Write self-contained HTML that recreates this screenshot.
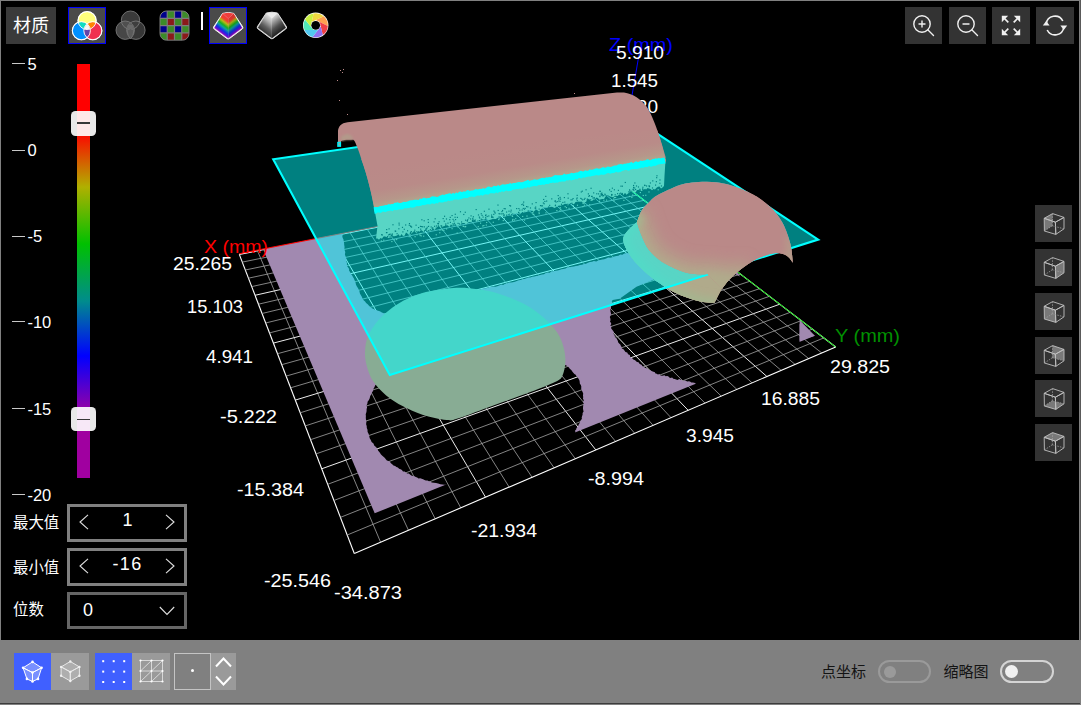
<!DOCTYPE html>
<html><head><meta charset="utf-8"><title>3D</title>
<style>
html,body{margin:0;padding:0;background:#000;}
body{width:1081px;height:705px;position:relative;overflow:hidden;font-family:"Liberation Sans","Noto Sans CJK SC",sans-serif;color:#fff;}
.abs{position:absolute}
</style></head><body>

<svg id="scene" width="1081" height="705" viewBox="0 0 1081 705" style="position:absolute;left:0;top:0">
<defs>
<mask id="floormask" maskUnits="userSpaceOnUse" x="0" y="0" width="1081" height="705">
  <polygon points="263.0,249.0 374.7,513.3 814.8,335.8 612.6,180.1" fill="#fff"/>
  <polygon points="378.2,380.1 377.3,382.0 376.5,383.9 375.1,385.5 374.4,387.3 373.4,389.0 373.0,390.9 371.9,392.4 371.4,394.2 370.2,396.1 369.7,398.2 368.9,400.0 367.6,401.7 367.4,403.6 366.5,405.4 367.1,407.4 366.6,409.1 366.6,410.9 366.3,412.6 365.7,414.3 365.9,416.0 365.8,417.6 365.9,419.3 366.4,420.9 366.3,422.5 366.1,424.3 366.7,426.0 366.8,428.0 367.5,429.8 367.6,432.0 368.7,433.9 369.2,436.0 369.7,438.2 370.8,440.0 371.6,442.0 373.5,443.4 374.2,445.6 376.0,447.0 377.4,448.7 378.2,450.8 379.7,452.5 381.0,454.4 382.6,455.9 383.8,456.9 384.9,458.0 385.8,459.3 386.9,460.4 388.5,461.1 389.9,461.8 390.9,463.3 392.2,464.3 393.5,465.5 395.1,466.0 396.4,467.0 397.9,467.6 399.1,468.8 400.6,469.3 401.9,470.0 403.0,471.4 404.6,471.5 405.9,472.4 407.1,473.5 408.8,473.5 410.0,474.5 411.3,475.5 412.7,476.0 414.4,476.2 415.8,476.9 417.2,477.4 418.5,478.5 420.2,478.3 421.7,478.8 423.1,479.3 424.5,480.0 425.9,480.6 427.5,480.4 428.9,481.2 430.4,481.5 431.7,482.5 433.9,482.7 436.0,483.1 438.1,483.6 440.3,484.2 442.4,484.5 444.5,484.8 446.0,484.7 447.4,485.0 447.4,488.0 575.5,436.3 575.2,430.2 576.2,429.5 576.4,428.3 577.4,427.0 578.3,425.7 578.8,424.2 579.7,422.9 580.2,421.5 580.7,420.2 581.9,419.1 581.7,417.5 582.1,416.1 582.6,414.7 582.6,413.1 583.6,411.6 583.2,409.9 583.0,408.3 583.1,406.6 583.3,405.0 583.8,403.4 583.0,401.8 583.9,400.2 583.0,398.7 583.2,397.0 583.0,395.4 583.2,393.6 582.6,391.9 581.7,390.2 581.2,388.5 581.3,386.6 580.8,384.9 579.8,383.5 579.7,381.7 579.3,380.1 578.5,378.7 577.7,377.2 576.5,376.2 575.7,374.7 574.4,373.9 573.3,372.7 572.3,371.4 571.3,370.0 570.0,369.0 568.9,367.4 567.4,366.1 565.5,365.2 563.9,364.0 562.9,363.1 562.0,362.0 520.0,330.0 420.0,330.0" fill="#000"/>
  <polygon points="612.6,300.0 611.8,301.5 612.2,303.2 611.6,304.7 611.1,306.1 611.0,307.7 610.4,309.0 610.4,310.5 610.6,312.0 611.0,313.8 610.6,315.5 609.8,317.1 610.4,318.7 610.5,320.2 610.0,321.7 611.1,323.0 611.2,324.2 610.3,325.6 611.7,326.5 611.0,328.0 611.6,329.1 612.4,330.1 613.2,331.1 613.9,332.2 613.4,333.7 614.2,334.8 614.9,336.0 614.9,337.5 616.5,338.3 617.1,339.6 617.8,340.8 618.1,342.3 619.1,343.4 620.3,344.4 620.8,345.7 621.6,347.0 621.9,348.6 623.5,349.3 624.4,350.6 625.5,351.9 627.2,352.5 628.1,354.2 629.8,355.0 630.3,357.1 632.0,358.0 633.3,359.5 635.2,360.2 636.0,361.3 637.1,362.1 638.5,362.3 639.7,364.0 641.5,364.7 642.5,366.3 644.1,366.9 645.4,368.0 647.0,368.3 648.4,369.4 650.0,370.0 651.5,371.1 653.3,371.7 654.6,372.1 655.5,373.4 656.7,373.8 657.9,374.4 659.5,373.9 660.4,375.4 662.3,375.8 664.5,375.3 665.6,376.2 667.0,376.0 668.2,376.3 669.3,377.6 670.6,378.1 672.1,377.5 673.3,378.7 674.7,378.9 676.1,379.6 677.5,380.0 679.2,379.1 680.6,379.7 681.9,380.1 683.2,381.2 684.8,380.2 686.1,380.9 687.5,381.4 689.0,381.2 690.3,381.7 691.4,382.6 692.8,382.6 694.2,382.8 695.6,383.2 695.6,387.9 799.6,345.9 799.6,320.0 850.0,360.0 850.0,250.0 737.8,272.2 700.0,250.0 655.0,279.0 636.5,286.7 619.6,298.7" fill="#000"/>
  <polygon points="342.1,231.0 342.1,232.8 342.8,234.4 342.3,236.2 342.7,237.9 343.5,239.5 343.7,241.3 344.1,243.1 344.2,245.0 344.5,246.5 344.5,248.0 344.3,249.6 345.0,251.0 345.3,252.6 344.9,254.3 345.4,255.9 346.1,257.5 346.4,259.3 346.2,261.2 347.0,262.9 346.9,265.0 347.5,266.8 348.6,268.0 349.1,269.3 349.1,270.8 350.1,271.9 350.6,273.3 351.4,274.4 352.2,275.5 352.8,276.7 353.6,278.0 354.3,279.4 354.9,281.1 355.6,282.7 356.0,284.7 356.9,286.4 357.9,288.1 358.8,289.8 359.5,291.6 359.9,293.5 360.9,295.2 361.8,296.8 362.5,298.6 363.6,300.2 365.1,301.4 366.1,303.1 367.7,304.3 369.0,305.8 370.3,307.1 371.9,308.2 373.6,309.1 375.4,309.8 377.2,310.4 379.0,311.0 380.3,311.4 381.4,312.2 420.0,330.0 469.9,291.7 472.2,291.1 474.5,290.4 477.0,290.8 479.3,290.3 481.4,289.0 483.4,288.6 485.4,288.2 487.4,287.9 489.3,287.1 491.3,287.0 493.2,286.4 495.4,286.7 497.3,286.3 499.2,285.4 501.1,284.6 503.2,285.0 505.0,283.8 507.0,283.4 508.9,282.5 510.9,282.5 512.9,282.2 514.9,281.8 516.8,281.0 518.6,280.3 520.7,280.1 522.5,279.3 524.6,279.1 526.4,278.2 528.3,277.6 530.3,277.4 532.2,276.8 534.3,276.6 536.2,276.0 538.2,275.7 540.1,275.1 542.0,274.6 544.0,274.3 545.8,273.1 547.7,272.5 549.8,272.7 551.5,271.2 553.6,271.3 555.5,270.7 557.5,270.4 559.5,270.0 561.5,269.2 563.6,268.9 565.6,268.5 567.5,267.2 569.6,267.2 571.7,266.7 573.8,266.6 575.8,266.1 577.9,265.7 579.8,264.9 582.0,264.8 583.9,264.1 586.0,263.7 587.9,262.7 589.9,262.1 592.0,261.8 593.9,261.0 596.2,261.4 598.1,260.6 600.2,260.1 602.2,259.6 604.2,259.2 606.2,258.5 608.1,257.4 610.3,257.8 612.3,257.3 614.3,256.5 616.3,256.0 618.4,255.7 620.2,254.5 622.4,254.8 624.3,253.5 626.3,253.2 628.4,253.2 630.2,252.0 632.4,252.1 634.4,251.9 636.2,250.8 638.1,250.1 640.1,249.7 642.2,249.4 644.2,248.9 646.1,248.2 648.1,247.7 650.0,247.0 720.0,235.0 652.6,175.1 612.6,140.1 330.0,190.0" fill="#000"/>
</mask>
<linearGradient id="cylgrad" gradientUnits="userSpaceOnUse" x1="500" y1="146" x2="507" y2="187">
  <stop offset="0" stop-color="#ba8988"/><stop offset="0.55" stop-color="#b98b88"/><stop offset="0.82" stop-color="#b6978a"/><stop offset="1" stop-color="#aeac8e"/>
</linearGradient>
<filter id="blur9" x="-30%" y="-30%" width="160%" height="160%"><feGaussianBlur stdDeviation="7"/></filter>
<filter id="blur1"><feGaussianBlur stdDeviation="1"/></filter>
<filter id="blur4" x="-30%" y="-30%" width="160%" height="160%"><feGaussianBlur stdDeviation="3.5"/></filter>
<clipPath id="d2clip"><path d="M637.0,222.3 C637.8,220.2 639.8,213.5 642.0,210.0 C644.2,206.5 647.6,203.6 650.0,201.2 C652.4,198.8 653.4,197.7 656.5,195.8 C659.6,193.9 664.4,191.6 668.4,189.8 C672.4,188.0 676.7,186.0 680.6,184.8 C684.5,183.6 687.9,183.1 692.0,182.6 C696.1,182.1 701.3,181.8 705.3,181.7 C709.3,181.6 712.9,181.9 716.0,182.2 C719.1,182.5 721.0,183.0 723.8,183.6 C726.6,184.2 729.9,185.1 733.0,186.0 C736.1,186.9 738.9,187.8 742.2,189.2 C745.5,190.6 749.9,192.9 753.0,194.6 C756.1,196.3 758.2,197.6 760.7,199.3 C763.2,201.0 765.5,202.8 768.0,205.0 C770.5,207.2 772.9,209.1 775.4,212.2 C777.9,215.2 780.8,219.6 782.8,223.3 C784.8,227.0 786.0,230.3 787.4,234.3 C788.8,238.3 790.2,242.6 791.1,247.3 C792.0,252.1 792.5,260.2 792.8,262.8 C790.5,259 788.5,256.5 786,255.3 C782,253.4 778,253 774,253.6 C768,254.6 762,256.6 757,259 C750.5,262.3 745,266 740.2,269.8 C736.5,272.7 733.3,275.5 730.5,278.2 C726.5,282.3 723.4,286.5 720.9,290.3 L714.5,302.8 C711,303 707,302.6 703,302 C699.5,301.5 697,300.8 694.4,300 C689,298.3 684.5,296.8 680,295 C675,292.8 671,290.8 667,288 C663,285.3 659.3,283.2 655.8,280.7 C650,276.5 645.5,272.6 641.3,268.6 C636.5,264 632.5,259 629.2,254 C626,249 623.5,244 623.2,239.6 C623,235.5 629,228.5 637,222.3 Z"/></clipPath>
<clipPath id="d2up"><path d="M637,222.3 C638.5,227 639.5,231 641.3,234.8 C643.3,240 645.5,245 648.5,249.3 C653,255.2 658.8,260 665.4,263.8 C671.5,267.4 678,270.3 684.7,272.2 C692,274 699.5,274.6 707.6,274 L760,330 L860,330 L860,150 L600,150 Z"/></clipPath>
<g id="dome2">
  <path d="M637.0,222.3 C637.8,220.2 639.8,213.5 642.0,210.0 C644.2,206.5 647.6,203.6 650.0,201.2 C652.4,198.8 653.4,197.7 656.5,195.8 C659.6,193.9 664.4,191.6 668.4,189.8 C672.4,188.0 676.7,186.0 680.6,184.8 C684.5,183.6 687.9,183.1 692.0,182.6 C696.1,182.1 701.3,181.8 705.3,181.7 C709.3,181.6 712.9,181.9 716.0,182.2 C719.1,182.5 721.0,183.0 723.8,183.6 C726.6,184.2 729.9,185.1 733.0,186.0 C736.1,186.9 738.9,187.8 742.2,189.2 C745.5,190.6 749.9,192.9 753.0,194.6 C756.1,196.3 758.2,197.6 760.7,199.3 C763.2,201.0 765.5,202.8 768.0,205.0 C770.5,207.2 772.9,209.1 775.4,212.2 C777.9,215.2 780.8,219.6 782.8,223.3 C784.8,227.0 786.0,230.3 787.4,234.3 C788.8,238.3 790.2,242.6 791.1,247.3 C792.0,252.1 792.5,260.2 792.8,262.8 C790.5,259 788.5,256.5 786,255.3 C782,253.4 778,253 774,253.6 C768,254.6 762,256.6 757,259 C750.5,262.3 745,266 740.2,269.8 C736.5,272.7 733.3,275.5 730.5,278.2 C726.5,282.3 723.4,286.5 720.9,290.3 L714.5,302.8 C711,303 707,302.6 703,302 C699.5,301.5 697,300.8 694.4,300 C689,298.3 684.5,296.8 680,295 C675,292.8 671,290.8 667,288 C663,285.3 659.3,283.2 655.8,280.7 C650,276.5 645.5,272.6 641.3,268.6 C636.5,264 632.5,259 629.2,254 C626,249 623.5,244 623.2,239.6 C623,235.5 629,228.5 637,222.3 Z" fill="#ba8988"/>
  <g clip-path="url(#d2clip)">
    <polygon points="646.2,209.5 647.0,211.8 648.2,215.1 649.3,218.1 650.0,220.1 650.4,221.4 650.8,222.9 651.6,225.1 652.5,227.7 653.4,230.0 654.3,232.1 655.2,234.2 656.2,236.4 657.3,238.6 658.1,240.3 659.0,241.7 660.6,243.6 662.5,245.8 664.5,247.6 666.5,249.2 669.1,250.9 671.8,252.5 674.5,253.9 677.3,255.3 680.2,256.6 683.2,257.9 685.7,258.9 688.0,259.6 690.7,260.2 693.8,260.7 696.8,261.0 699.7,261.1 703.5,261.0 708.3,261.0 713.1,261.5 717.3,262.1 721.8,262.6 726.7,263.4 730.9,264.0 733.4,264.1 736.7,263.2 741.4,261.4 745.2,259.9 760.0,300.0 740.0,330.0 680.0,325.0 640.0,300.0 605.0,260.0 605.0,225.0 625.0,205.0" fill="#b4a08a" filter="url(#blur9)"/>
    <polygon points="636.8,213.0 637.7,215.3 638.8,218.5 639.8,221.3 640.4,223.1 640.8,224.4 641.3,226.0 642.2,228.4 643.1,231.1 644.1,233.7 645.1,236.1 646.1,238.4 647.2,240.7 648.3,243.1 649.5,245.3 650.9,247.5 653.0,250.1 655.4,252.8 658.0,255.2 660.7,257.4 663.8,259.3 666.9,261.2 669.9,262.9 673.0,264.3 676.2,265.8 679.3,267.1 682.3,268.3 685.5,269.3 688.9,270.1 692.5,270.6 696.2,271.0 699.8,271.1 703.6,271.0 707.8,271.0 711.9,271.4 716.0,272.0 720.4,272.5 725.3,273.3 730.1,274.0 734.6,274.0 739.7,272.8 745.0,270.7 748.9,269.2 760.0,300.0 740.0,330.0 680.0,325.0 640.0,300.0 605.0,260.0 605.0,225.0 625.0,205.0" fill="#b0aa8b" filter="url(#blur4)"/>
    <path d="M640,215 C632,224 622,234 623.2,241 C625,252 640,268.6 655.8,281.5 C668,290.5 682,297 694.4,301 C702,303.4 709,304 716,303.5" fill="none" stroke="#a6b48e" stroke-width="14" filter="url(#blur4)"/>
    <path d="M788,238 L792.5,263 L783,254" fill="none" stroke="#b2a68c" stroke-width="4" filter="url(#blur4)"/>
  </g>
</g>
</defs>
<rect width="1081" height="705" fill="#000"/>
<g>
<line x1="239.3" y1="254.4" x2="617.5" y2="180.0" stroke="#ffffff" stroke-width="1.1"/>
<line x1="239.3" y1="254.4" x2="354.3" y2="553.5" stroke="#ffffff" stroke-width="1.1"/>
<line x1="242.3" y1="262.1" x2="623.9" y2="184.9" stroke="#a4a4a4" stroke-width="0.8"/>
<line x1="257.5" y1="250.8" x2="380.6" y2="542.2" stroke="#a4a4a4" stroke-width="0.8"/>
<line x1="245.3" y1="270.0" x2="630.4" y2="189.9" stroke="#a4a4a4" stroke-width="0.8"/>
<line x1="277.0" y1="247.0" x2="408.5" y2="530.3" stroke="#a4a4a4" stroke-width="0.8"/>
<line x1="248.4" y1="278.2" x2="637.1" y2="195.0" stroke="#a4a4a4" stroke-width="0.8"/>
<line x1="295.9" y1="243.3" x2="435.2" y2="518.8" stroke="#a4a4a4" stroke-width="0.8"/>
<line x1="251.7" y1="286.6" x2="644.0" y2="200.3" stroke="#a4a4a4" stroke-width="0.8"/>
<line x1="314.4" y1="239.6" x2="460.8" y2="507.8" stroke="#a4a4a4" stroke-width="0.8"/>
<line x1="255.0" y1="295.3" x2="651.0" y2="205.6" stroke="#ececec" stroke-width="1.0"/>
<line x1="332.4" y1="236.1" x2="485.5" y2="497.2" stroke="#ececec" stroke-width="1.0"/>
<line x1="258.5" y1="304.2" x2="658.2" y2="211.1" stroke="#a4a4a4" stroke-width="0.8"/>
<line x1="350.0" y1="232.6" x2="509.2" y2="487.1" stroke="#a4a4a4" stroke-width="0.8"/>
<line x1="262.0" y1="313.5" x2="665.5" y2="216.7" stroke="#a4a4a4" stroke-width="0.8"/>
<line x1="367.2" y1="229.2" x2="532.1" y2="477.3" stroke="#a4a4a4" stroke-width="0.8"/>
<line x1="265.7" y1="323.0" x2="673.0" y2="222.5" stroke="#a4a4a4" stroke-width="0.8"/>
<line x1="383.9" y1="226.0" x2="554.1" y2="467.8" stroke="#a4a4a4" stroke-width="0.8"/>
<line x1="269.5" y1="332.9" x2="680.7" y2="228.4" stroke="#a4a4a4" stroke-width="0.8"/>
<line x1="400.2" y1="222.7" x2="575.3" y2="458.7" stroke="#a4a4a4" stroke-width="0.8"/>
<line x1="273.4" y1="343.1" x2="688.6" y2="234.4" stroke="#ececec" stroke-width="1.0"/>
<line x1="416.1" y1="219.6" x2="595.8" y2="449.9" stroke="#ececec" stroke-width="1.0"/>
<line x1="277.5" y1="353.7" x2="696.7" y2="240.6" stroke="#a4a4a4" stroke-width="0.8"/>
<line x1="431.7" y1="216.6" x2="615.5" y2="441.4" stroke="#a4a4a4" stroke-width="0.8"/>
<line x1="281.7" y1="364.7" x2="705.0" y2="247.0" stroke="#a4a4a4" stroke-width="0.8"/>
<line x1="446.9" y1="213.6" x2="634.6" y2="433.2" stroke="#a4a4a4" stroke-width="0.8"/>
<line x1="286.1" y1="376.1" x2="713.5" y2="253.5" stroke="#a4a4a4" stroke-width="0.8"/>
<line x1="461.7" y1="210.6" x2="653.1" y2="425.3" stroke="#a4a4a4" stroke-width="0.8"/>
<line x1="290.6" y1="387.8" x2="722.2" y2="260.2" stroke="#a4a4a4" stroke-width="0.8"/>
<line x1="476.2" y1="207.8" x2="671.0" y2="417.7" stroke="#a4a4a4" stroke-width="0.8"/>
<line x1="295.3" y1="400.1" x2="731.2" y2="267.0" stroke="#ececec" stroke-width="1.0"/>
<line x1="490.4" y1="205.0" x2="688.2" y2="410.3" stroke="#ececec" stroke-width="1.0"/>
<line x1="300.2" y1="412.8" x2="740.4" y2="274.1" stroke="#a4a4a4" stroke-width="0.8"/>
<line x1="504.3" y1="202.3" x2="705.0" y2="403.1" stroke="#a4a4a4" stroke-width="0.8"/>
<line x1="305.3" y1="425.9" x2="749.8" y2="281.3" stroke="#a4a4a4" stroke-width="0.8"/>
<line x1="517.8" y1="199.6" x2="721.2" y2="396.1" stroke="#a4a4a4" stroke-width="0.8"/>
<line x1="310.5" y1="439.7" x2="759.5" y2="288.7" stroke="#a4a4a4" stroke-width="0.8"/>
<line x1="531.1" y1="197.0" x2="736.9" y2="389.4" stroke="#a4a4a4" stroke-width="0.8"/>
<line x1="316.0" y1="453.9" x2="769.5" y2="296.3" stroke="#a4a4a4" stroke-width="0.8"/>
<line x1="544.1" y1="194.4" x2="752.1" y2="382.9" stroke="#a4a4a4" stroke-width="0.8"/>
<line x1="321.7" y1="468.8" x2="779.8" y2="304.2" stroke="#ececec" stroke-width="1.0"/>
<line x1="556.8" y1="191.9" x2="766.9" y2="376.5" stroke="#ececec" stroke-width="1.0"/>
<line x1="327.7" y1="484.3" x2="790.3" y2="312.3" stroke="#a4a4a4" stroke-width="0.8"/>
<line x1="569.2" y1="189.5" x2="781.2" y2="370.4" stroke="#a4a4a4" stroke-width="0.8"/>
<line x1="333.9" y1="500.5" x2="801.2" y2="320.6" stroke="#a4a4a4" stroke-width="0.8"/>
<line x1="581.4" y1="187.1" x2="795.1" y2="364.4" stroke="#a4a4a4" stroke-width="0.8"/>
<line x1="340.4" y1="517.4" x2="812.3" y2="329.1" stroke="#a4a4a4" stroke-width="0.8"/>
<line x1="593.3" y1="184.8" x2="808.7" y2="358.6" stroke="#a4a4a4" stroke-width="0.8"/>
<line x1="347.2" y1="535.0" x2="823.8" y2="337.9" stroke="#a4a4a4" stroke-width="0.8"/>
<line x1="605.0" y1="182.5" x2="821.8" y2="353.0" stroke="#a4a4a4" stroke-width="0.8"/>
<line x1="354.3" y1="553.5" x2="835.7" y2="347.0" stroke="#ffffff" stroke-width="1.1"/>
<line x1="617.5" y1="180.0" x2="835.7" y2="347.0" stroke="#ffffff" stroke-width="1.1"/>
</g>
<line x1="835.7" y1="347.0" x2="617.5" y2="180.0" stroke="#00e800" stroke-width="1"/>
<line x1="617.5" y1="180.0" x2="639.8" y2="50" stroke="#0000ff" stroke-width="1"/>
<!-- purple floor -->
<rect width="1081" height="705" fill="#a189b0" mask="url(#floormask)"/>
<polygon points="799.6,320 799.6,340.8 814.8,335.8" fill="#a189b0"/>
<polygon points="733,273 740,276.5 737,272" fill="#a189b0"/>
<line x1="239.3" y1="253.70000000000002" x2="617.5" y2="179.3" stroke="#ff0000" stroke-width="1.1"/>
<!-- left dome -->
<path d="M453.7,288.0 C444.5,288.6 431.6,290.4 422.4,293.0 C413.1,295.6 405.4,299.4 398.2,303.8 C391.0,308.2 384.0,314.0 379.0,319.4 C374.0,324.8 370.3,330.9 368.0,336.3 C365.7,341.7 365.2,347.0 365.0,352.0 C364.8,357.0 365.6,361.7 366.9,366.5 C368.2,371.3 369.8,376.2 373.0,381.0 C376.2,385.8 381.2,391.2 386.2,395.4 C391.2,399.6 397.0,403.1 403.0,406.3 C409.0,409.5 415.1,412.4 422.4,414.7 C429.6,417.0 440.5,419.4 446.5,420.0 C452.5,420.6 450.5,420.8 458.5,418.3 C466.5,415.8 482.6,409.4 494.7,405.0 C506.8,400.6 521.0,395.6 531.0,391.8 C541.0,388.0 549.8,384.6 555.0,382.0 C560.2,379.4 560.6,379.4 562.3,376.0 C564.0,372.6 565.2,366.5 565.4,361.7 C565.6,356.9 564.8,351.8 563.5,347.0 C562.2,342.2 560.8,337.7 557.4,332.7 C554.0,327.7 548.6,321.8 543.0,317.0 C537.4,312.2 531.0,307.6 523.7,303.8 C516.5,300.0 507.1,296.4 499.5,294.0 C491.9,291.6 485.4,290.3 477.8,289.3 C470.2,288.3 462.9,287.4 453.7,288.0Z" fill="#88ac94"/>
<!-- z labels behind cylinder -->
<g font-family="'Liberation Sans',sans-serif" font-size="17.5" fill="#fff">
<text x="609" y="51" fill="#0000ff" textLength="64" lengthAdjust="spacingAndGlyphs">Z (mm)</text>
<text x="616" y="58.5" textLength="48" lengthAdjust="spacingAndGlyphs">5.910</text>
<text x="611" y="86.5" textLength="47" lengthAdjust="spacingAndGlyphs">1.545</text>
<text x="604" y="112.5" textLength="54" lengthAdjust="spacingAndGlyphs">-2.820</text>
</g>
<!-- lower parts (below plane) of cylinder -->
<polygon points="374.4,209.0 665.6,159.0 664.5,176.0 664.0,186.0 664.0,185.9 662.5,187.4 661.0,188.5 659.5,186.5 658.0,186.8 656.5,187.8 655.0,189.4 653.5,188.9 652.0,190.2 650.5,188.9 649.0,188.6 647.5,188.0 646.0,190.1 644.5,189.2 643.0,190.0 641.5,190.9 640.0,191.0 638.5,189.8 637.0,190.2 635.5,192.4 634.0,192.5 632.5,191.5 631.0,191.4 629.5,192.2 628.0,193.6 626.5,194.8 625.0,192.8 623.5,194.9 622.0,192.8 620.5,194.7 619.0,194.7 617.5,195.9 616.0,195.8 614.5,196.3 613.0,197.3 611.5,196.8 610.0,196.5 608.5,195.6 607.0,195.8 605.5,196.5 604.0,199.1 602.5,199.0 601.0,199.2 599.5,199.8 598.0,198.3 596.5,197.3 595.0,199.5 593.5,199.4 592.0,201.0 590.5,200.7 589.0,198.8 587.5,199.1 586.0,202.1 584.5,202.3 583.0,202.9 581.5,201.5 580.0,201.7 578.5,201.5 577.0,201.8 575.5,201.9 574.0,204.3 572.5,203.8 571.0,203.7 569.5,202.7 568.0,205.7 566.5,203.8 565.0,203.3 563.5,204.5 562.0,204.9 560.5,205.7 559.0,205.6 557.5,205.9 556.0,207.2 554.5,207.9 553.0,207.2 551.5,206.5 550.0,206.7 548.5,206.5 547.0,207.6 545.5,207.0 544.0,207.6 542.5,207.7 541.0,209.0 539.5,211.0 538.0,211.0 536.5,209.1 535.0,210.3 533.5,211.9 532.0,209.9 530.5,210.0 529.0,210.3 527.5,211.3 526.0,212.1 524.5,211.6 523.0,213.0 521.5,212.0 520.0,214.6 518.5,214.1 517.0,212.9 515.5,213.4 514.0,214.1 512.5,213.2 511.0,216.1 509.5,213.5 508.0,214.6 506.5,216.0 505.0,216.6 503.5,215.9 502.0,217.1 500.5,215.2 499.0,217.6 497.5,217.3 496.0,218.9 494.5,219.1 493.0,218.4 491.5,219.3 490.0,219.8 488.5,220.3 487.0,218.7 485.5,218.4 484.0,219.7 482.5,219.2 481.0,219.4 479.5,221.9 478.0,220.1 476.5,222.1 475.0,220.1 473.5,220.2 472.0,221.2 470.5,221.9 469.0,222.0 467.5,223.0 466.0,224.6 464.5,222.9 463.0,223.1 461.5,223.2 460.0,225.4 458.5,225.1 457.0,226.0 455.5,223.7 454.0,226.3 452.5,226.3 451.0,224.2 449.5,227.1 448.0,225.7 446.5,226.1 445.0,225.7 443.5,226.5 442.0,227.3 440.5,227.7 439.0,226.4 437.5,226.7 436.0,228.5 434.5,230.1 433.0,228.2 431.5,230.0 430.0,230.9 428.5,229.9 427.0,231.2 425.5,229.3 424.0,232.2 422.5,231.1 421.0,230.1 419.5,231.8 418.0,230.9 416.5,233.5 415.0,231.5 413.5,231.9 412.0,232.8 410.5,234.7 409.0,234.5 407.5,233.6 406.0,232.5 404.5,235.7 403.0,236.1 401.5,233.9 400.0,236.4 398.5,234.2 397.0,235.6 395.5,235.9 394.0,236.3 392.5,235.9 391.0,237.4 389.5,237.7 388.0,237.9 386.5,236.9 385.0,236.5 383.5,236.6 382.0,238.7 380.5,238.1 379.0,239.8 377.5,238.5 376.0,238.5 377.5,226.0" fill="#b0aa8a"/>
<rect x="386.1" y="229.0" width="1.15" height="1.15" fill="#000"/><rect x="498.4" y="216.4" width="1.15" height="1.15" fill="#000"/><rect x="452.5" y="218.8" width="1.15" height="1.15" fill="#000"/><rect x="444.0" y="215.7" width="1.15" height="1.15" fill="#000"/><rect x="389.6" y="233.6" width="1.15" height="1.15" fill="#000"/><rect x="572.5" y="198.0" width="1.15" height="1.15" fill="#000"/><rect x="435.9" y="225.4" width="1.15" height="1.15" fill="#000"/><rect x="522.4" y="203.5" width="1.15" height="1.15" fill="#000"/><rect x="437.9" y="223.0" width="1.15" height="1.15" fill="#000"/><rect x="611.2" y="194.8" width="1.15" height="1.15" fill="#000"/><rect x="445.1" y="224.7" width="1.15" height="1.15" fill="#000"/><rect x="463.2" y="213.9" width="1.15" height="1.15" fill="#000"/><rect x="648.4" y="185.3" width="1.15" height="1.15" fill="#000"/><rect x="443.0" y="226.6" width="1.15" height="1.15" fill="#000"/><rect x="497.6" y="209.9" width="1.15" height="1.15" fill="#000"/><rect x="421.3" y="219.2" width="1.15" height="1.15" fill="#000"/><rect x="491.0" y="214.5" width="1.15" height="1.15" fill="#000"/><rect x="394.6" y="230.5" width="1.15" height="1.15" fill="#000"/><rect x="633.3" y="189.6" width="1.15" height="1.15" fill="#000"/><rect x="629.2" y="190.4" width="1.15" height="1.15" fill="#000"/><rect x="472.8" y="216.2" width="1.15" height="1.15" fill="#000"/><rect x="590.5" y="187.7" width="1.15" height="1.15" fill="#000"/><rect x="389.0" y="233.9" width="1.15" height="1.15" fill="#000"/><rect x="485.4" y="214.3" width="1.15" height="1.15" fill="#000"/><rect x="473.5" y="220.9" width="1.15" height="1.15" fill="#000"/><rect x="458.9" y="223.4" width="1.15" height="1.15" fill="#000"/><rect x="479.1" y="217.4" width="1.15" height="1.15" fill="#000"/><rect x="651.9" y="187.4" width="1.15" height="1.15" fill="#000"/><rect x="438.5" y="221.2" width="1.15" height="1.15" fill="#000"/><rect x="611.8" y="187.6" width="1.15" height="1.15" fill="#000"/><rect x="502.0" y="209.9" width="1.15" height="1.15" fill="#000"/><rect x="485.1" y="217.1" width="1.15" height="1.15" fill="#000"/><rect x="639.3" y="188.7" width="1.15" height="1.15" fill="#000"/><rect x="633.0" y="186.8" width="1.15" height="1.15" fill="#000"/><rect x="388.5" y="228.3" width="1.15" height="1.15" fill="#000"/><rect x="596.2" y="193.2" width="1.15" height="1.15" fill="#000"/><rect x="391.5" y="234.3" width="1.15" height="1.15" fill="#000"/><rect x="639.5" y="190.1" width="1.15" height="1.15" fill="#000"/><rect x="452.5" y="224.8" width="1.15" height="1.15" fill="#000"/><rect x="475.6" y="209.0" width="1.15" height="1.15" fill="#000"/><rect x="456.8" y="216.8" width="1.15" height="1.15" fill="#000"/><rect x="453.9" y="222.7" width="1.15" height="1.15" fill="#000"/><rect x="582.1" y="199.3" width="1.15" height="1.15" fill="#000"/><rect x="381.1" y="234.1" width="1.15" height="1.15" fill="#000"/><rect x="593.1" y="192.3" width="1.15" height="1.15" fill="#000"/><rect x="646.0" y="185.4" width="1.15" height="1.15" fill="#000"/><rect x="386.8" y="236.5" width="1.15" height="1.15" fill="#000"/><rect x="649.8" y="182.4" width="1.15" height="1.15" fill="#000"/><rect x="649.0" y="185.6" width="1.15" height="1.15" fill="#000"/><rect x="501.2" y="213.3" width="1.15" height="1.15" fill="#000"/><rect x="519.2" y="209.6" width="1.15" height="1.15" fill="#000"/><rect x="606.3" y="195.1" width="1.15" height="1.15" fill="#000"/><rect x="588.3" y="195.8" width="1.15" height="1.15" fill="#000"/><rect x="551.2" y="198.3" width="1.15" height="1.15" fill="#000"/><rect x="472.4" y="219.1" width="1.15" height="1.15" fill="#000"/><rect x="600.6" y="193.0" width="1.15" height="1.15" fill="#000"/><rect x="402.3" y="231.3" width="1.15" height="1.15" fill="#000"/><rect x="449.7" y="216.8" width="1.15" height="1.15" fill="#000"/><rect x="398.3" y="228.2" width="1.15" height="1.15" fill="#000"/><rect x="471.9" y="219.9" width="1.15" height="1.15" fill="#000"/><rect x="656.4" y="175.2" width="1.15" height="1.15" fill="#000"/><rect x="454.7" y="213.7" width="1.15" height="1.15" fill="#000"/><rect x="403.7" y="228.7" width="1.15" height="1.15" fill="#000"/><rect x="580.2" y="197.8" width="1.15" height="1.15" fill="#000"/><rect x="506.0" y="214.6" width="1.15" height="1.15" fill="#000"/><rect x="554.9" y="200.4" width="1.15" height="1.15" fill="#000"/><rect x="570.1" y="203.2" width="1.15" height="1.15" fill="#000"/><rect x="567.4" y="193.2" width="1.15" height="1.15" fill="#000"/><rect x="414.2" y="229.6" width="1.15" height="1.15" fill="#000"/><rect x="539.9" y="205.0" width="1.15" height="1.15" fill="#000"/><rect x="485.2" y="218.7" width="1.15" height="1.15" fill="#000"/><rect x="449.8" y="221.8" width="1.15" height="1.15" fill="#000"/><rect x="449.2" y="219.1" width="1.15" height="1.15" fill="#000"/><rect x="543.1" y="198.9" width="1.15" height="1.15" fill="#000"/><rect x="523.1" y="201.5" width="1.15" height="1.15" fill="#000"/><rect x="445.2" y="223.4" width="1.15" height="1.15" fill="#000"/><rect x="659.4" y="179.4" width="1.15" height="1.15" fill="#000"/><rect x="408.9" y="223.0" width="1.15" height="1.15" fill="#000"/><rect x="617.0" y="193.1" width="1.15" height="1.15" fill="#000"/><rect x="637.9" y="186.4" width="1.15" height="1.15" fill="#000"/><rect x="413.6" y="231.0" width="1.15" height="1.15" fill="#000"/><rect x="433.5" y="221.3" width="1.15" height="1.15" fill="#000"/><rect x="642.3" y="188.8" width="1.15" height="1.15" fill="#000"/><rect x="485.0" y="215.0" width="1.15" height="1.15" fill="#000"/><rect x="453.3" y="220.4" width="1.15" height="1.15" fill="#000"/><rect x="599.3" y="195.5" width="1.15" height="1.15" fill="#000"/><rect x="548.1" y="206.5" width="1.15" height="1.15" fill="#000"/><rect x="554.8" y="205.1" width="1.15" height="1.15" fill="#000"/><rect x="419.9" y="225.8" width="1.15" height="1.15" fill="#000"/><rect x="437.5" y="227.5" width="1.15" height="1.15" fill="#000"/><rect x="563.8" y="197.0" width="1.15" height="1.15" fill="#000"/><rect x="437.4" y="222.9" width="1.15" height="1.15" fill="#000"/><rect x="571.3" y="202.7" width="1.15" height="1.15" fill="#000"/><rect x="432.2" y="227.3" width="1.15" height="1.15" fill="#000"/><rect x="604.3" y="193.6" width="1.15" height="1.15" fill="#000"/><rect x="534.5" y="207.5" width="1.15" height="1.15" fill="#000"/><rect x="491.5" y="216.8" width="1.15" height="1.15" fill="#000"/><rect x="535.1" y="208.2" width="1.15" height="1.15" fill="#000"/><rect x="426.2" y="228.0" width="1.15" height="1.15" fill="#000"/><rect x="576.1" y="198.4" width="1.15" height="1.15" fill="#000"/><rect x="466.7" y="220.0" width="1.15" height="1.15" fill="#000"/><rect x="648.8" y="186.1" width="1.15" height="1.15" fill="#000"/><rect x="480.7" y="213.2" width="1.15" height="1.15" fill="#000"/><rect x="497.4" y="204.5" width="1.15" height="1.15" fill="#000"/><rect x="435.6" y="227.6" width="1.15" height="1.15" fill="#000"/><rect x="381.7" y="234.4" width="1.15" height="1.15" fill="#000"/><rect x="634.3" y="182.4" width="1.15" height="1.15" fill="#000"/><rect x="494.6" y="212.5" width="1.15" height="1.15" fill="#000"/><rect x="629.0" y="189.3" width="1.15" height="1.15" fill="#000"/><rect x="384.2" y="236.8" width="1.15" height="1.15" fill="#000"/><rect x="535.5" y="202.0" width="1.15" height="1.15" fill="#000"/><rect x="405.1" y="224.4" width="1.15" height="1.15" fill="#000"/><rect x="555.5" y="201.5" width="1.15" height="1.15" fill="#000"/><rect x="421.1" y="226.0" width="1.15" height="1.15" fill="#000"/><rect x="459.9" y="211.2" width="1.15" height="1.15" fill="#000"/><rect x="410.7" y="231.0" width="1.15" height="1.15" fill="#000"/><rect x="518.3" y="208.0" width="1.15" height="1.15" fill="#000"/><rect x="516.1" y="208.0" width="1.15" height="1.15" fill="#000"/><rect x="395.1" y="230.7" width="1.15" height="1.15" fill="#000"/><rect x="635.0" y="188.9" width="1.15" height="1.15" fill="#000"/><rect x="554.9" y="204.6" width="1.15" height="1.15" fill="#000"/><rect x="601.6" y="194.6" width="1.15" height="1.15" fill="#000"/><rect x="442.6" y="218.0" width="1.15" height="1.15" fill="#000"/><rect x="613.8" y="189.2" width="1.15" height="1.15" fill="#000"/><rect x="431.6" y="227.7" width="1.15" height="1.15" fill="#000"/><rect x="526.0" y="206.0" width="1.15" height="1.15" fill="#000"/><rect x="488.2" y="215.4" width="1.15" height="1.15" fill="#000"/><rect x="584.4" y="197.8" width="1.15" height="1.15" fill="#000"/><rect x="633.0" y="184.9" width="1.15" height="1.15" fill="#000"/><rect x="593.6" y="197.2" width="1.15" height="1.15" fill="#000"/><rect x="390.8" y="234.9" width="1.15" height="1.15" fill="#000"/><rect x="549.1" y="204.8" width="1.15" height="1.15" fill="#000"/><rect x="535.1" y="206.5" width="1.15" height="1.15" fill="#000"/><rect x="498.5" y="213.1" width="1.15" height="1.15" fill="#000"/><rect x="544.3" y="200.9" width="1.15" height="1.15" fill="#000"/><rect x="506.0" y="211.5" width="1.15" height="1.15" fill="#000"/><rect x="503.6" y="208.0" width="1.15" height="1.15" fill="#000"/><rect x="518.0" y="211.8" width="1.15" height="1.15" fill="#000"/><rect x="446.3" y="225.3" width="1.15" height="1.15" fill="#000"/><rect x="509.2" y="205.0" width="1.15" height="1.15" fill="#000"/><rect x="430.6" y="226.4" width="1.15" height="1.15" fill="#000"/><rect x="416.2" y="231.2" width="1.15" height="1.15" fill="#000"/><rect x="501.4" y="211.0" width="1.15" height="1.15" fill="#000"/><rect x="523.9" y="208.6" width="1.15" height="1.15" fill="#000"/><rect x="391.5" y="234.7" width="1.15" height="1.15" fill="#000"/><rect x="586.8" y="198.5" width="1.15" height="1.15" fill="#000"/><rect x="599.3" y="196.1" width="1.15" height="1.15" fill="#000"/><rect x="522.1" y="212.0" width="1.15" height="1.15" fill="#000"/><rect x="486.6" y="215.9" width="1.15" height="1.15" fill="#000"/><rect x="621.7" y="192.9" width="1.15" height="1.15" fill="#000"/><rect x="660.9" y="185.4" width="1.15" height="1.15" fill="#000"/><rect x="434.6" y="218.2" width="1.15" height="1.15" fill="#000"/><rect x="638.3" y="190.0" width="1.15" height="1.15" fill="#000"/><rect x="426.6" y="226.7" width="1.15" height="1.15" fill="#000"/><rect x="398.5" y="222.6" width="1.15" height="1.15" fill="#000"/><rect x="479.0" y="220.0" width="1.15" height="1.15" fill="#000"/><rect x="632.8" y="188.5" width="1.15" height="1.15" fill="#000"/><rect x="457.5" y="222.8" width="1.15" height="1.15" fill="#000"/><rect x="521.6" y="209.4" width="1.15" height="1.15" fill="#000"/><rect x="639.4" y="189.4" width="1.15" height="1.15" fill="#000"/><rect x="522.7" y="207.9" width="1.15" height="1.15" fill="#000"/><rect x="470.0" y="218.4" width="1.15" height="1.15" fill="#000"/><rect x="425.5" y="229.2" width="1.15" height="1.15" fill="#000"/><rect x="644.1" y="184.7" width="1.15" height="1.15" fill="#000"/><rect x="427.6" y="219.0" width="1.15" height="1.15" fill="#000"/><rect x="601.3" y="192.5" width="1.15" height="1.15" fill="#000"/><rect x="559.4" y="200.8" width="1.15" height="1.15" fill="#000"/><rect x="481.5" y="214.8" width="1.15" height="1.15" fill="#000"/><rect x="543.6" y="203.2" width="1.15" height="1.15" fill="#000"/><rect x="557.6" y="195.0" width="1.15" height="1.15" fill="#000"/><rect x="491.2" y="216.6" width="1.15" height="1.15" fill="#000"/><rect x="659.3" y="182.7" width="1.15" height="1.15" fill="#000"/><rect x="542.8" y="202.4" width="1.15" height="1.15" fill="#000"/><rect x="504.7" y="208.2" width="1.15" height="1.15" fill="#000"/><rect x="429.8" y="229.1" width="1.15" height="1.15" fill="#000"/><rect x="611.2" y="194.0" width="1.15" height="1.15" fill="#000"/><rect x="451.5" y="215.0" width="1.15" height="1.15" fill="#000"/><rect x="545.2" y="195.8" width="1.15" height="1.15" fill="#000"/><rect x="567.2" y="203.7" width="1.15" height="1.15" fill="#000"/><rect x="389.5" y="236.3" width="1.15" height="1.15" fill="#000"/><rect x="422.1" y="226.2" width="1.15" height="1.15" fill="#000"/><rect x="524.6" y="207.8" width="1.15" height="1.15" fill="#000"/><rect x="632.5" y="189.1" width="1.15" height="1.15" fill="#000"/><rect x="564.2" y="201.5" width="1.15" height="1.15" fill="#000"/><rect x="386.3" y="232.0" width="1.15" height="1.15" fill="#000"/><rect x="410.0" y="232.7" width="1.15" height="1.15" fill="#000"/><rect x="480.7" y="218.6" width="1.15" height="1.15" fill="#000"/><rect x="546.1" y="200.5" width="1.15" height="1.15" fill="#000"/><rect x="437.6" y="223.3" width="1.15" height="1.15" fill="#000"/><rect x="418.0" y="227.0" width="1.15" height="1.15" fill="#000"/><rect x="644.1" y="189.5" width="1.15" height="1.15" fill="#000"/><rect x="407.0" y="230.2" width="1.15" height="1.15" fill="#000"/><rect x="560.0" y="198.5" width="1.15" height="1.15" fill="#000"/><rect x="493.4" y="210.5" width="1.15" height="1.15" fill="#000"/><rect x="454.5" y="216.7" width="1.15" height="1.15" fill="#000"/><rect x="538.6" y="208.5" width="1.15" height="1.15" fill="#000"/><rect x="478.8" y="216.5" width="1.15" height="1.15" fill="#000"/><rect x="644.3" y="184.9" width="1.15" height="1.15" fill="#000"/><rect x="586.9" y="200.1" width="1.15" height="1.15" fill="#000"/><rect x="392.4" y="224.2" width="1.15" height="1.15" fill="#000"/><rect x="529.9" y="207.4" width="1.15" height="1.15" fill="#000"/><rect x="396.5" y="233.1" width="1.15" height="1.15" fill="#000"/><rect x="599.6" y="190.9" width="1.15" height="1.15" fill="#000"/><rect x="645.3" y="188.9" width="1.15" height="1.15" fill="#000"/><rect x="420.1" y="228.6" width="1.15" height="1.15" fill="#000"/><rect x="523.0" y="204.8" width="1.15" height="1.15" fill="#000"/><rect x="560.9" y="203.7" width="1.15" height="1.15" fill="#000"/><rect x="467.2" y="219.1" width="1.15" height="1.15" fill="#000"/><rect x="464.7" y="211.7" width="1.15" height="1.15" fill="#000"/><rect x="600.8" y="194.2" width="1.15" height="1.15" fill="#000"/><rect x="581.7" y="190.6" width="1.15" height="1.15" fill="#000"/><rect x="590.1" y="199.2" width="1.15" height="1.15" fill="#000"/><rect x="511.2" y="213.9" width="1.15" height="1.15" fill="#000"/><rect x="443.7" y="220.6" width="1.15" height="1.15" fill="#000"/><rect x="409.7" y="232.7" width="1.15" height="1.15" fill="#000"/><rect x="474.6" y="219.4" width="1.15" height="1.15" fill="#000"/><rect x="591.4" y="195.8" width="1.15" height="1.15" fill="#000"/><rect x="580.7" y="191.4" width="1.15" height="1.15" fill="#000"/><rect x="455.0" y="219.0" width="1.15" height="1.15" fill="#000"/><rect x="602.3" y="195.4" width="1.15" height="1.15" fill="#000"/><rect x="527.6" y="210.4" width="1.15" height="1.15" fill="#000"/><rect x="652.2" y="180.3" width="1.15" height="1.15" fill="#000"/><rect x="441.2" y="226.4" width="1.15" height="1.15" fill="#000"/><rect x="453.4" y="224.2" width="1.15" height="1.15" fill="#000"/><rect x="446.6" y="225.6" width="1.15" height="1.15" fill="#000"/><rect x="472.2" y="217.8" width="1.15" height="1.15" fill="#000"/><rect x="447.4" y="222.6" width="1.15" height="1.15" fill="#000"/><rect x="635.9" y="185.4" width="1.15" height="1.15" fill="#000"/><rect x="567.6" y="197.6" width="1.15" height="1.15" fill="#000"/><rect x="656.1" y="177.1" width="1.15" height="1.15" fill="#000"/><rect x="576.7" y="200.1" width="1.15" height="1.15" fill="#000"/><rect x="621.8" y="185.6" width="1.15" height="1.15" fill="#000"/><rect x="540.8" y="205.3" width="1.15" height="1.15" fill="#000"/><rect x="466.8" y="220.5" width="1.15" height="1.15" fill="#000"/><rect x="401.9" y="226.8" width="1.15" height="1.15" fill="#000"/><rect x="636.8" y="190.2" width="1.15" height="1.15" fill="#000"/><rect x="410.1" y="231.8" width="1.15" height="1.15" fill="#000"/><rect x="642.0" y="188.4" width="1.15" height="1.15" fill="#000"/><rect x="388.1" y="234.3" width="1.15" height="1.15" fill="#000"/><rect x="391.7" y="233.4" width="1.15" height="1.15" fill="#000"/><rect x="576.6" y="194.8" width="1.15" height="1.15" fill="#000"/><rect x="587.8" y="193.3" width="1.15" height="1.15" fill="#000"/><rect x="482.5" y="216.5" width="1.15" height="1.15" fill="#000"/><rect x="610.6" y="190.9" width="1.15" height="1.15" fill="#000"/><rect x="398.6" y="224.4" width="1.15" height="1.15" fill="#000"/><rect x="624.7" y="181.9" width="1.15" height="1.15" fill="#000"/><rect x="410.2" y="226.0" width="1.15" height="1.15" fill="#000"/><rect x="438.0" y="226.5" width="1.15" height="1.15" fill="#000"/><rect x="619.1" y="193.3" width="1.15" height="1.15" fill="#000"/><rect x="609.0" y="189.3" width="1.15" height="1.15" fill="#000"/><rect x="558.1" y="197.9" width="1.15" height="1.15" fill="#000"/><rect x="461.0" y="221.4" width="1.15" height="1.15" fill="#000"/><rect x="593.6" y="197.5" width="1.15" height="1.15" fill="#000"/><rect x="437.8" y="225.3" width="1.15" height="1.15" fill="#000"/><rect x="385.9" y="232.0" width="1.15" height="1.15" fill="#000"/><rect x="452.4" y="223.2" width="1.15" height="1.15" fill="#000"/><rect x="483.8" y="210.7" width="1.15" height="1.15" fill="#000"/><rect x="470.5" y="215.3" width="1.15" height="1.15" fill="#000"/><rect x="620.1" y="192.6" width="1.15" height="1.15" fill="#000"/><rect x="554.4" y="200.6" width="1.15" height="1.15" fill="#000"/><rect x="503.1" y="214.6" width="1.15" height="1.15" fill="#000"/><rect x="598.0" y="193.3" width="1.15" height="1.15" fill="#000"/><rect x="531.7" y="203.3" width="1.15" height="1.15" fill="#000"/><rect x="441.1" y="225.5" width="1.15" height="1.15" fill="#000"/><rect x="611.2" y="193.9" width="1.15" height="1.15" fill="#000"/><rect x="428.0" y="225.8" width="1.15" height="1.15" fill="#000"/><rect x="594.9" y="198.7" width="1.15" height="1.15" fill="#000"/><rect x="655.8" y="181.1" width="1.15" height="1.15" fill="#000"/><rect x="518.6" y="212.6" width="1.15" height="1.15" fill="#000"/><rect x="604.7" y="194.4" width="1.15" height="1.15" fill="#000"/><rect x="477.9" y="214.4" width="1.15" height="1.15" fill="#000"/><rect x="614.6" y="194.2" width="1.15" height="1.15" fill="#000"/><rect x="440.5" y="225.2" width="1.15" height="1.15" fill="#000"/><rect x="411.0" y="226.5" width="1.15" height="1.15" fill="#000"/><rect x="559.5" y="196.8" width="1.15" height="1.15" fill="#000"/><rect x="576.6" y="197.4" width="1.15" height="1.15" fill="#000"/><rect x="601.9" y="193.9" width="1.15" height="1.15" fill="#000"/><rect x="493.2" y="213.8" width="1.15" height="1.15" fill="#000"/><rect x="491.3" y="216.0" width="1.15" height="1.15" fill="#000"/><rect x="630.5" y="190.7" width="1.15" height="1.15" fill="#000"/><rect x="387.1" y="235.9" width="1.15" height="1.15" fill="#000"/><rect x="634.1" y="187.4" width="1.15" height="1.15" fill="#000"/><rect x="521.3" y="204.0" width="1.15" height="1.15" fill="#000"/><rect x="445.9" y="218.4" width="1.15" height="1.15" fill="#000"/><rect x="510.0" y="205.4" width="1.15" height="1.15" fill="#000"/><rect x="592.3" y="197.4" width="1.15" height="1.15" fill="#000"/><rect x="562.3" y="201.9" width="1.15" height="1.15" fill="#000"/><rect x="423.8" y="226.3" width="1.15" height="1.15" fill="#000"/><rect x="617.8" y="189.8" width="1.15" height="1.15" fill="#000"/><rect x="427.8" y="221.8" width="1.15" height="1.15" fill="#000"/><rect x="503.7" y="214.5" width="1.15" height="1.15" fill="#000"/><rect x="415.5" y="224.6" width="1.15" height="1.15" fill="#000"/><rect x="510.3" y="211.3" width="1.15" height="1.15" fill="#000"/><rect x="434.0" y="225.7" width="1.15" height="1.15" fill="#000"/><rect x="465.0" y="219.6" width="1.15" height="1.15" fill="#000"/><rect x="423.6" y="220.2" width="1.15" height="1.15" fill="#000"/><rect x="424.0" y="230.2" width="1.15" height="1.15" fill="#000"/><rect x="527.3" y="206.3" width="1.15" height="1.15" fill="#000"/><rect x="425.4" y="228.3" width="1.15" height="1.15" fill="#000"/><rect x="655.0" y="184.5" width="1.15" height="1.15" fill="#000"/><rect x="585.5" y="189.2" width="1.15" height="1.15" fill="#000"/><rect x="408.7" y="224.7" width="1.15" height="1.15" fill="#000"/><rect x="488.4" y="208.6" width="1.15" height="1.15" fill="#000"/><rect x="586.8" y="199.2" width="1.15" height="1.15" fill="#000"/><rect x="502.6" y="213.1" width="1.15" height="1.15" fill="#000"/><rect x="410.1" y="225.4" width="1.15" height="1.15" fill="#000"/><rect x="438.2" y="226.5" width="1.15" height="1.15" fill="#000"/><rect x="492.5" y="216.7" width="1.15" height="1.15" fill="#000"/><rect x="603.1" y="195.0" width="1.15" height="1.15" fill="#000"/><rect x="558.3" y="199.4" width="1.15" height="1.15" fill="#000"/><rect x="510.6" y="209.6" width="1.15" height="1.15" fill="#000"/><rect x="494.1" y="211.5" width="1.15" height="1.15" fill="#000"/><rect x="588.9" y="195.0" width="1.15" height="1.15" fill="#000"/><rect x="541.9" y="205.3" width="1.15" height="1.15" fill="#000"/><rect x="591.2" y="195.9" width="1.15" height="1.15" fill="#000"/><rect x="583.7" y="198.9" width="1.15" height="1.15" fill="#000"/><rect x="628.2" y="191.3" width="1.15" height="1.15" fill="#000"/><rect x="620.4" y="185.6" width="1.15" height="1.15" fill="#000"/><rect x="571.6" y="199.2" width="1.15" height="1.15" fill="#000"/><rect x="468.3" y="217.4" width="1.15" height="1.15" fill="#000"/><rect x="557.2" y="201.0" width="1.15" height="1.15" fill="#000"/><rect x="600.6" y="194.4" width="1.15" height="1.15" fill="#000"/><rect x="581.1" y="198.4" width="1.15" height="1.15" fill="#000"/><rect x="499.4" y="213.3" width="1.15" height="1.15" fill="#000"/><rect x="508.4" y="210.6" width="1.15" height="1.15" fill="#000"/><rect x="570.4" y="199.3" width="1.15" height="1.15" fill="#000"/><rect x="642.3" y="186.7" width="1.15" height="1.15" fill="#000"/><rect x="599.4" y="190.6" width="1.15" height="1.15" fill="#000"/><rect x="390.8" y="235.4" width="1.15" height="1.15" fill="#000"/>
<rect x="533.2" y="213.9" width="1.15" height="1.15" fill="#b0aa8a"/><rect x="645.2" y="194.7" width="1.15" height="1.15" fill="#b0aa8a"/><rect x="526.4" y="215.5" width="1.15" height="1.15" fill="#b0aa8a"/><rect x="532.6" y="213.7" width="1.15" height="1.15" fill="#b0aa8a"/><rect x="582.3" y="206.1" width="1.15" height="1.15" fill="#b0aa8a"/><rect x="613.8" y="197.0" width="1.15" height="1.15" fill="#b0aa8a"/><rect x="527.1" y="217.9" width="1.15" height="1.15" fill="#b0aa8a"/><rect x="439.2" y="232.2" width="1.15" height="1.15" fill="#b0aa8a"/><rect x="573.0" y="207.6" width="1.15" height="1.15" fill="#b0aa8a"/><rect x="414.5" y="236.1" width="1.15" height="1.15" fill="#b0aa8a"/><rect x="657.6" y="189.2" width="1.15" height="1.15" fill="#b0aa8a"/><rect x="457.4" y="226.3" width="1.15" height="1.15" fill="#b0aa8a"/><rect x="492.7" y="221.7" width="1.15" height="1.15" fill="#b0aa8a"/><rect x="498.6" y="218.2" width="1.15" height="1.15" fill="#b0aa8a"/><rect x="576.9" y="204.7" width="1.15" height="1.15" fill="#b0aa8a"/><rect x="443.3" y="229.8" width="1.15" height="1.15" fill="#b0aa8a"/><rect x="589.1" y="204.2" width="1.15" height="1.15" fill="#b0aa8a"/><rect x="441.7" y="229.6" width="1.15" height="1.15" fill="#b0aa8a"/><rect x="606.0" y="199.5" width="1.15" height="1.15" fill="#b0aa8a"/><rect x="416.5" y="234.2" width="1.15" height="1.15" fill="#b0aa8a"/><rect x="599.0" y="200.8" width="1.15" height="1.15" fill="#b0aa8a"/><rect x="512.3" y="218.8" width="1.15" height="1.15" fill="#b0aa8a"/><rect x="538.5" y="211.6" width="1.15" height="1.15" fill="#b0aa8a"/><rect x="479.6" y="227.9" width="1.15" height="1.15" fill="#b0aa8a"/><rect x="560.1" y="208.6" width="1.15" height="1.15" fill="#b0aa8a"/><rect x="512.0" y="219.7" width="1.15" height="1.15" fill="#b0aa8a"/><rect x="463.0" y="225.8" width="1.15" height="1.15" fill="#b0aa8a"/><rect x="615.1" y="196.9" width="1.15" height="1.15" fill="#b0aa8a"/><rect x="480.0" y="222.6" width="1.15" height="1.15" fill="#b0aa8a"/><rect x="486.1" y="221.9" width="1.15" height="1.15" fill="#b0aa8a"/><rect x="451.5" y="228.1" width="1.15" height="1.15" fill="#b0aa8a"/><rect x="380.8" y="240.4" width="1.15" height="1.15" fill="#b0aa8a"/><rect x="583.5" y="202.7" width="1.15" height="1.15" fill="#b0aa8a"/><rect x="465.1" y="226.0" width="1.15" height="1.15" fill="#b0aa8a"/><rect x="515.2" y="218.1" width="1.15" height="1.15" fill="#b0aa8a"/><rect x="565.9" y="207.1" width="1.15" height="1.15" fill="#b0aa8a"/><rect x="482.2" y="225.4" width="1.15" height="1.15" fill="#b0aa8a"/><rect x="396.1" y="239.0" width="1.15" height="1.15" fill="#b0aa8a"/><rect x="613.5" y="200.4" width="1.15" height="1.15" fill="#b0aa8a"/><rect x="419.6" y="235.0" width="1.15" height="1.15" fill="#b0aa8a"/><rect x="614.4" y="196.9" width="1.15" height="1.15" fill="#b0aa8a"/><rect x="383.2" y="239.6" width="1.15" height="1.15" fill="#b0aa8a"/><rect x="648.4" y="191.4" width="1.15" height="1.15" fill="#b0aa8a"/><rect x="408.6" y="236.1" width="1.15" height="1.15" fill="#b0aa8a"/><rect x="420.3" y="232.9" width="1.15" height="1.15" fill="#b0aa8a"/><rect x="477.7" y="226.1" width="1.15" height="1.15" fill="#b0aa8a"/><rect x="423.1" y="235.6" width="1.15" height="1.15" fill="#b0aa8a"/><rect x="427.4" y="233.6" width="1.15" height="1.15" fill="#b0aa8a"/><rect x="631.3" y="196.9" width="1.15" height="1.15" fill="#b0aa8a"/><rect x="568.5" y="207.8" width="1.15" height="1.15" fill="#b0aa8a"/><rect x="632.1" y="194.5" width="1.15" height="1.15" fill="#b0aa8a"/><rect x="435.7" y="234.2" width="1.15" height="1.15" fill="#b0aa8a"/><rect x="575.4" y="207.9" width="1.15" height="1.15" fill="#b0aa8a"/><rect x="503.7" y="217.8" width="1.15" height="1.15" fill="#b0aa8a"/><rect x="628.9" y="195.8" width="1.15" height="1.15" fill="#b0aa8a"/><rect x="446.0" y="228.3" width="1.15" height="1.15" fill="#b0aa8a"/><rect x="419.3" y="233.5" width="1.15" height="1.15" fill="#b0aa8a"/><rect x="511.7" y="215.6" width="1.15" height="1.15" fill="#b0aa8a"/><rect x="420.7" y="235.3" width="1.15" height="1.15" fill="#b0aa8a"/><rect x="532.2" y="212.0" width="1.15" height="1.15" fill="#b0aa8a"/><rect x="623.3" y="199.8" width="1.15" height="1.15" fill="#b0aa8a"/><rect x="512.0" y="215.7" width="1.15" height="1.15" fill="#b0aa8a"/><rect x="538.6" y="213.0" width="1.15" height="1.15" fill="#b0aa8a"/><rect x="485.7" y="224.5" width="1.15" height="1.15" fill="#b0aa8a"/><rect x="498.1" y="219.0" width="1.15" height="1.15" fill="#b0aa8a"/><rect x="559.6" y="207.0" width="1.15" height="1.15" fill="#b0aa8a"/><rect x="559.4" y="210.2" width="1.15" height="1.15" fill="#b0aa8a"/><rect x="572.5" y="205.0" width="1.15" height="1.15" fill="#b0aa8a"/><rect x="642.7" y="194.9" width="1.15" height="1.15" fill="#b0aa8a"/><rect x="524.0" y="219.5" width="1.15" height="1.15" fill="#b0aa8a"/><rect x="516.7" y="215.2" width="1.15" height="1.15" fill="#b0aa8a"/><rect x="582.5" y="202.9" width="1.15" height="1.15" fill="#b0aa8a"/><rect x="556.3" y="210.0" width="1.15" height="1.15" fill="#b0aa8a"/><rect x="483.3" y="225.0" width="1.15" height="1.15" fill="#b0aa8a"/><rect x="513.8" y="219.4" width="1.15" height="1.15" fill="#b0aa8a"/><rect x="439.4" y="229.6" width="1.15" height="1.15" fill="#b0aa8a"/><rect x="502.7" y="220.0" width="1.15" height="1.15" fill="#b0aa8a"/><rect x="613.1" y="198.4" width="1.15" height="1.15" fill="#b0aa8a"/><rect x="462.6" y="225.8" width="1.15" height="1.15" fill="#b0aa8a"/><rect x="522.1" y="215.9" width="1.15" height="1.15" fill="#b0aa8a"/><rect x="456.6" y="232.5" width="1.15" height="1.15" fill="#b0aa8a"/><rect x="564.6" y="206.1" width="1.15" height="1.15" fill="#b0aa8a"/><rect x="603.3" y="199.7" width="1.15" height="1.15" fill="#b0aa8a"/><rect x="464.4" y="226.2" width="1.15" height="1.15" fill="#b0aa8a"/><rect x="545.4" y="212.3" width="1.15" height="1.15" fill="#b0aa8a"/><rect x="391.3" y="241.0" width="1.15" height="1.15" fill="#b0aa8a"/><rect x="583.8" y="204.6" width="1.15" height="1.15" fill="#b0aa8a"/><rect x="394.0" y="239.3" width="1.15" height="1.15" fill="#b0aa8a"/><rect x="464.7" y="225.9" width="1.15" height="1.15" fill="#b0aa8a"/><rect x="639.8" y="192.0" width="1.15" height="1.15" fill="#b0aa8a"/>
<use href="#dome2"/>
<!-- plane -->
<polygon points="273.2,159.3 389.8,375.0 818.2,239.6 620.0,109.0" fill="#00ffff" fill-opacity="0.5"/>
<polygon points="273.2,159.3 389.8,375.0 818.2,239.6 620.0,109.0" fill="none" stroke="#00ffff" stroke-width="2.1"/>
<!-- cylinder upper (pink) -->
<path d="M338,142 L338,131 C338.3,126.5 341,123 347.6,122.2 L617,92.6 L624,92.4 C633,93.6 641,99 646.5,106.5 C652.5,115 660,136 665.6,157 L665.6,162 L374.6,212 L374.2,207 C372,195 367.5,176 361.3,159 C360,154.5 358.5,150 356.8,146.2 C355.5,142.5 354.3,140.6 353.3,139.8 L346.2,139.8 C343.5,140 341.8,140.6 341,141.2 L341,142 Z" fill="#ba8988"/>
<path d="M361.3,159 C367.5,176 372,195 374.6,211 L665.6,161 C663,148 660,138 657,130 Z" fill="url(#cylgrad)"/>
<polygon points="373.6,207.2 375.1,207.0 376.6,207.0 378.1,206.9 379.6,206.2 381.1,205.9 382.6,205.7 384.1,205.5 385.6,205.1 387.1,205.0 388.6,204.0 390.1,204.5 391.6,203.9 393.1,204.1 394.6,202.8 396.1,202.7 397.6,202.2 399.1,203.1 400.6,203.0 402.1,202.4 403.6,201.7 405.1,202.1 406.6,201.8 408.1,201.2 409.6,200.5 411.1,200.3 412.6,200.2 414.1,199.8 415.6,199.7 417.1,199.8 418.6,200.0 420.1,198.4 421.6,198.9 423.1,197.8 424.6,197.7 426.1,198.5 427.6,197.9 429.1,198.1 430.6,197.2 432.1,196.3 433.6,196.6 435.1,196.6 436.6,196.9 438.1,196.7 439.6,195.7 441.1,195.3 442.6,194.6 444.1,195.1 445.6,194.2 447.1,193.9 448.6,193.4 450.1,193.2 451.6,193.9 453.1,192.8 454.6,193.8 456.1,192.2 457.6,193.2 459.1,191.8 460.6,191.4 462.1,192.2 463.6,191.2 465.1,191.7 466.6,190.6 468.1,190.1 469.6,191.0 471.1,190.6 472.6,190.6 474.1,190.1 475.6,188.9 477.1,189.4 478.6,189.3 480.1,188.7 481.6,189.1 483.1,187.9 484.6,188.7 486.1,188.0 487.6,186.7 489.1,186.5 490.6,187.2 492.1,187.2 493.6,185.8 495.1,185.9 496.6,186.2 498.1,185.1 499.6,185.9 501.1,185.1 502.6,184.2 504.1,184.4 505.6,184.5 507.1,184.0 508.6,184.1 510.1,183.1 511.6,183.8 513.1,182.9 514.6,183.0 516.1,182.7 517.6,182.2 519.1,181.9 520.6,182.2 522.1,182.2 523.6,181.7 525.1,181.1 526.6,180.4 528.1,179.8 529.6,180.9 531.1,180.3 532.6,180.2 534.1,179.2 535.6,179.4 537.1,179.7 538.6,179.2 540.1,178.6 541.6,177.9 543.1,177.8 544.6,178.2 546.1,177.2 547.6,177.4 549.1,177.0 550.6,177.2 552.1,176.8 553.6,175.8 555.1,175.1 556.6,175.2 558.1,175.2 559.6,175.2 561.1,175.3 562.6,175.1 564.1,173.6 565.6,174.5 567.1,174.3 568.6,174.1 570.1,173.4 571.6,172.7 573.1,173.3 574.6,173.0 576.1,172.5 577.6,172.6 579.1,171.5 580.6,170.8 582.1,171.3 583.6,171.4 585.1,170.2 586.6,170.8 588.1,170.8 589.6,169.5 591.1,169.8 592.6,169.7 594.1,169.1 595.6,168.4 597.1,168.3 598.6,168.7 600.1,168.5 601.6,167.8 603.1,167.0 604.6,167.8 606.1,167.5 607.6,166.4 609.1,166.7 610.6,166.9 612.1,166.6 613.6,165.8 615.1,165.5 616.6,165.4 618.1,164.5 619.6,164.3 621.1,164.0 622.6,164.5 624.1,163.8 625.6,163.8 627.1,163.3 628.6,163.2 630.1,162.4 631.6,162.0 633.1,163.2 634.6,162.0 636.1,161.3 637.6,161.9 639.1,161.8 640.6,160.6 642.1,161.0 643.6,160.4 645.1,160.4 646.6,159.4 648.1,159.2 649.6,160.3 651.1,159.9 652.6,159.1 654.1,158.9 655.6,158.2 657.1,158.7 658.6,157.9 660.1,158.5 661.6,157.9 663.1,157.8 664.6,157.7 665.6,163.4 664.1,163.4 662.6,163.9 661.1,164.1 659.6,164.2 658.1,164.5 656.6,165.3 655.1,165.9 653.6,165.7 652.1,166.6 650.6,166.8 649.1,166.0 647.6,166.9 646.1,166.9 644.6,166.9 643.1,168.1 641.6,167.5 640.1,168.2 638.6,168.5 637.1,169.1 635.6,169.1 634.1,169.0 632.6,169.3 631.1,169.2 629.6,170.4 628.1,170.7 626.6,170.1 625.1,170.1 623.6,170.6 622.1,171.0 620.6,171.9 619.1,172.2 617.6,172.4 616.1,171.7 614.6,172.8 613.1,173.0 611.6,173.2 610.1,173.8 608.6,173.0 607.1,173.3 605.6,174.3 604.1,174.8 602.6,174.7 601.1,174.5 599.6,175.2 598.1,175.6 596.6,175.1 595.1,175.6 593.6,175.8 592.1,175.9 590.6,176.6 589.1,176.5 587.6,176.8 586.1,176.9 584.6,177.8 583.1,177.3 581.6,178.4 580.1,178.0 578.6,178.1 577.1,179.4 575.6,178.8 574.1,180.0 572.6,180.1 571.1,180.4 569.6,179.8 568.1,180.4 566.6,180.2 565.1,181.5 563.6,181.6 562.1,181.6 560.6,181.7 559.1,181.8 557.6,182.7 556.1,182.5 554.6,182.9 553.1,182.6 551.6,183.0 550.1,183.0 548.6,184.1 547.1,184.1 545.6,183.9 544.1,185.0 542.6,184.6 541.1,185.0 539.6,184.9 538.1,185.3 536.6,186.3 535.1,185.9 533.6,186.0 532.1,186.6 530.6,186.7 529.1,187.7 527.6,187.0 526.1,188.3 524.6,187.4 523.1,188.7 521.6,188.7 520.1,188.4 518.6,188.9 517.1,189.0 515.6,189.2 514.1,189.4 512.6,189.8 511.1,190.9 509.6,191.1 508.1,191.3 506.6,190.6 505.1,191.0 503.6,192.0 502.1,191.3 500.6,192.3 499.1,192.1 497.6,193.2 496.1,192.3 494.6,193.5 493.1,193.2 491.6,193.2 490.1,193.3 488.6,194.5 487.1,194.4 485.6,194.3 484.1,194.8 482.6,195.7 481.1,195.1 479.6,195.8 478.1,195.5 476.6,195.8 475.1,196.8 473.6,197.0 472.1,196.6 470.6,196.7 469.1,197.0 467.6,197.9 466.1,198.0 464.6,198.0 463.1,198.2 461.6,198.9 460.1,199.3 458.6,199.7 457.1,199.6 455.6,199.4 454.1,199.5 452.6,200.6 451.1,200.5 449.6,201.1 448.1,200.6 446.6,201.7 445.1,201.4 443.6,202.3 442.1,202.6 440.6,202.4 439.1,202.1 437.6,203.4 436.1,203.1 434.6,203.9 433.1,203.4 431.6,203.6 430.1,204.6 428.6,204.3 427.1,204.3 425.6,204.8 424.1,205.3 422.6,204.9 421.1,205.8 419.6,205.9 418.1,206.3 416.6,206.1 415.1,207.0 413.6,207.4 412.1,207.7 410.6,207.3 409.1,208.1 407.6,207.9 406.1,208.6 404.6,208.0 403.1,209.3 401.6,209.6 400.1,209.3 398.6,209.6 397.1,209.9 395.6,210.2 394.1,209.8 392.6,211.2 391.1,210.6 389.6,210.8 388.1,210.9 386.6,211.4 385.1,212.3 383.6,211.6 382.1,212.0 380.6,212.9 379.1,212.6 377.6,212.6 376.1,213.6 374.6,213.8" fill="#00ffff"/>
<polygon points="341.2,141.2 341.4,136.5 347,133.8 351.5,135.5 353.3,139.8 346.2,139.8" fill="#b29a8a" filter="url(#blur1)"/>
<rect x="337.2" y="141.8" width="3.9" height="5.1" fill="#00f0f8"/><rect x="338.6" y="143.2" width="1.2" height="2" fill="#c89890"/>
<rect x="340" y="70" width="1" height="1" fill="#ba8988"/><rect x="343" y="69" width="1" height="1" fill="#ba8988"/><rect x="337" y="80" width="1" height="1" fill="#ba8988"/><rect x="339" y="100" width="1" height="1" fill="#ba8988"/><rect x="347" y="114" width="1" height="1" fill="#ba8988"/><rect x="342" y="72" width="1" height="1" fill="#ba8988"/><rect x="574" y="93" width="1" height="1" fill="#ba8988"/>
<!-- right dome upper -->
<use href="#dome2" clip-path="url(#d2up)"/>
<!-- axis labels -->
<g font-family="'Liberation Sans',sans-serif" font-size="17.5" fill="#fff">
<text x="204" y="252.5" fill="#ff0000" textLength="64" lengthAdjust="spacingAndGlyphs">X (mm)</text>
<text x="173" y="269.5" textLength="59" lengthAdjust="spacingAndGlyphs">25.265</text>
<text x="187" y="312.5" textLength="56" lengthAdjust="spacingAndGlyphs">15.103</text>
<text x="206" y="362.5" textLength="47" lengthAdjust="spacingAndGlyphs">4.941</text>
<text x="220" y="422.5" textLength="57" lengthAdjust="spacingAndGlyphs">-5.222</text>
<text x="237" y="495.5" textLength="67" lengthAdjust="spacingAndGlyphs">-15.384</text>
<text x="264" y="586.5" textLength="67" lengthAdjust="spacingAndGlyphs">-25.546</text>
<text x="334" y="598.5" textLength="68" lengthAdjust="spacingAndGlyphs">-34.873</text>
<text x="471" y="536.5" textLength="66" lengthAdjust="spacingAndGlyphs">-21.934</text>
<text x="588" y="484.5" textLength="56" lengthAdjust="spacingAndGlyphs">-8.994</text>
<text x="686" y="441.5" textLength="48" lengthAdjust="spacingAndGlyphs">3.945</text>
<text x="761" y="404.5" textLength="59" lengthAdjust="spacingAndGlyphs">16.885</text>
<text x="830" y="372.5" textLength="60" lengthAdjust="spacingAndGlyphs">29.825</text>
<text x="835" y="341.5" fill="#009000" textLength="65" lengthAdjust="spacingAndGlyphs">Y (mm)</text>
</g>
</svg>

<div class="abs" style="left:0;top:0;width:1081px;height:1px;background:#808080"></div>
<div class="abs" style="left:0;top:0;width:1px;height:705px;background:#808080"></div>
<div class="abs" style="left:1079px;top:0;width:1px;height:705px;background:#808080"></div>
<div class="abs" style="left:1080px;top:0;width:1px;height:705px;background:#5a5a5a"></div>
<div class="abs" style="left:6px;top:7px;width:50px;height:37px;background:#3a3a3a;font-size:18px;line-height:39px;text-align:center;color:#fff">材质</div>
<div class="abs" style="left:68px;top:7px;width:36px;height:35px;border:1px solid #0000ff;background:#4a4a4a">
<svg width="36" height="35" viewBox="69 8 36 35" style="position:absolute;left:0;top:0">
<defs><clipPath id="cy"><circle cx="87.1" cy="20.6" r="8.7"/></clipPath><clipPath id="cb"><circle cx="81.4" cy="30.7" r="8.7"/></clipPath></defs>
<circle cx="87.1" cy="20.6" r="9.6" fill="#fff"/><circle cx="81.4" cy="30.7" r="9.6" fill="#fff"/><circle cx="92.8" cy="30.7" r="9.6" fill="#fff"/>
<circle cx="87.1" cy="20.6" r="8.7" fill="#ffff7c"/><circle cx="81.4" cy="30.7" r="8.7" fill="#0090ff"/><circle cx="92.8" cy="30.7" r="8.7" fill="#f03050"/>
<circle cx="81.4" cy="30.7" r="8.7" fill="#10dcc0" clip-path="url(#cy)"/>
<circle cx="92.8" cy="30.7" r="8.7" fill="#ff8400" clip-path="url(#cy)"/>
<circle cx="92.8" cy="30.7" r="8.7" fill="#6444a8" clip-path="url(#cb)"/>
<g clip-path="url(#cy)"><circle cx="92.8" cy="30.7" r="8.7" fill="#f6f6f6" clip-path="url(#cb)"/></g>
<g fill="none" stroke="#fff" stroke-width="0.9"><circle cx="87.1" cy="20.6" r="9.0"/><circle cx="81.4" cy="30.7" r="9.0"/><circle cx="92.8" cy="30.7" r="9.0"/></g>
</svg></div>
<svg class="abs" style="left:113px;top:8px" width="36" height="35" viewBox="113 8 36 35">
<circle cx="130.5" cy="20.2" r="9.2" fill="#3a3a3a"/><circle cx="125.2" cy="30.2" r="9.2" fill="#545454" fill-opacity="0.85"/><circle cx="135.9" cy="30.2" r="9.2" fill="#404040" fill-opacity="0.85"/>
<g stroke="#787878" stroke-width="0.9" fill="none"><circle cx="130.5" cy="20.2" r="9.2"/><circle cx="125.2" cy="30.2" r="9.2"/><circle cx="135.9" cy="30.2" r="9.2"/></g>
<path d="M127,30 Q130.5,27 134,30 Q133.5,36.5 130.5,39 Q127.5,36.5 127,30Z" fill="#5a5a5a" stroke="#777" stroke-width="0.8"/>
<path d="M127.6,25.5 Q130.5,23 133.4,25.5 L133.6,29.5 L132.2,28.7 L131.3,30 L130.5,28.7 L129.6,30 L128.8,28.7 L127.4,29.5Z" fill="#6a6a6a"/>
</svg>
<svg class="abs" style="left:157px;top:8px" width="36" height="35" viewBox="157 8 36 35">
<defs><clipPath id="mz"><rect x="160" y="11" width="29" height="29.2" rx="6.5"/></clipPath></defs>
<g clip-path="url(#mz)"><rect x="160.00" y="11.00" width="7.25" height="7.3" fill="#00008b"/><rect x="167.25" y="11.00" width="7.25" height="7.3" fill="#3c8c28"/><rect x="174.50" y="11.00" width="7.25" height="7.3" fill="#00008b"/><rect x="181.75" y="11.00" width="7.25" height="7.3" fill="#3c8c28"/><rect x="160.00" y="18.30" width="7.25" height="7.3" fill="#3c8c28"/><rect x="167.25" y="18.30" width="7.25" height="7.3" fill="#8b1a1a"/><rect x="174.50" y="18.30" width="7.25" height="7.3" fill="#3c8c28"/><rect x="181.75" y="18.30" width="7.25" height="7.3" fill="#8b1a1a"/><rect x="160.00" y="25.60" width="7.25" height="7.3" fill="#00008b"/><rect x="167.25" y="25.60" width="7.25" height="7.3" fill="#3c8c28"/><rect x="174.50" y="25.60" width="7.25" height="7.3" fill="#00008b"/><rect x="181.75" y="25.60" width="7.25" height="7.3" fill="#3c8c28"/><rect x="160.00" y="32.90" width="7.25" height="7.3" fill="#3c8c28"/><rect x="167.25" y="32.90" width="7.25" height="7.3" fill="#8b1a1a"/><rect x="174.50" y="32.90" width="7.25" height="7.3" fill="#3c8c28"/><rect x="181.75" y="32.90" width="7.25" height="7.3" fill="#8b1a1a"/><g stroke="#7c7c7c" stroke-width="1.2"><line x1="167.25" y1="11" x2="167.25" y2="40.2"/><line x1="160" y1="18.30" x2="189" y2="18.30"/><line x1="174.50" y1="11" x2="174.50" y2="40.2"/><line x1="160" y1="25.60" x2="189" y2="25.60"/><line x1="181.75" y1="11" x2="181.75" y2="40.2"/><line x1="160" y1="32.90" x2="189" y2="32.90"/></g></g>
<rect x="160" y="11" width="29" height="29.2" rx="6.5" fill="none" stroke="#7c7c7c" stroke-width="1"/>
</svg>
<div class="abs" style="left:200.5px;top:12px;width:2px;height:18px;background:#fff"></div>
<div class="abs" style="left:209px;top:7px;width:36px;height:35px;border:1px solid #0000ff;background:#4a4a4a">
<svg width="36" height="35" viewBox="210 8 36 35" style="position:absolute;left:0;top:0">
<defs><linearGradient id="rbl" gradientUnits="userSpaceOnUse" x1="221" y1="33.6" x2="231.4" y2="20.2"><stop offset="0" stop-color="#c818c8"/><stop offset="0.1" stop-color="#6010d0"/><stop offset="0.22" stop-color="#1030e8"/><stop offset="0.38" stop-color="#10a0a0"/><stop offset="0.5" stop-color="#18b020"/><stop offset="0.66" stop-color="#b8b818"/><stop offset="0.8" stop-color="#f04030"/><stop offset="1" stop-color="#f03838"/></linearGradient>
<linearGradient id="rbr" gradientUnits="userSpaceOnUse" x1="235.4" y1="33.6" x2="225" y2="20.2"><stop offset="0" stop-color="#c818c8"/><stop offset="0.1" stop-color="#6010d0"/><stop offset="0.22" stop-color="#1030e8"/><stop offset="0.38" stop-color="#10a0a0"/><stop offset="0.5" stop-color="#18b020"/><stop offset="0.66" stop-color="#b8b818"/><stop offset="0.8" stop-color="#f04030"/><stop offset="1" stop-color="#f03838"/></linearGradient></defs>
<path d="M222.6,13.4 Q228.2,11.8 233.8,13.4 L242.8,27 Q243.2,28.4 242,29.2 L229.4,38.6 Q228.2,39.4 227,38.6 L214.4,29.2 Q213.2,28.4 213.6,27 Z" fill="#f4f4f4" stroke="#f4f4f4" stroke-width="1" stroke-linejoin="round"/>
<path d="M222.8,13.6 L228.2,18.4 L228.2,38.4 L214.2,28 Z" fill="url(#rbl)"/>
<path d="M233.6,13.6 L228.2,18.4 L228.2,38.4 L242.2,28 Z" fill="url(#rbr)"/>
<path d="M233.6,13.6 L228.2,18.4 L228.2,38.4 L242.2,28 Z" fill="#000" fill-opacity="0.1"/>
<path d="M222.8,13.6 L228.2,18.6 L233.6,13.6 L228.2,12.8Z" fill="#f03c3c"/>
</svg></div>
<svg class="abs" style="left:254px;top:8px" width="36" height="35" viewBox="254 8 36 35">
<defs><linearGradient id="gpl" gradientUnits="userSpaceOnUse" x1="264.7" y1="33.4" x2="275.1" y2="20"><stop offset="0" stop-color="#303030"/><stop offset="0.35" stop-color="#606060"/><stop offset="0.7" stop-color="#b0b0b0"/><stop offset="1" stop-color="#e0e0e0"/></linearGradient>
<linearGradient id="gpr" gradientUnits="userSpaceOnUse" x1="279.1" y1="33.4" x2="268.7" y2="20"><stop offset="0" stop-color="#1c1c1c"/><stop offset="0.4" stop-color="#505050"/><stop offset="0.75" stop-color="#a0a0a0"/><stop offset="1" stop-color="#d8d8d8"/></linearGradient></defs>
<path d="M266.3,13 Q271.9,11.4 277.5,13 L286.5,26.8 Q286.9,28.2 285.7,29 L273.1,38.4 Q271.9,39.2 270.7,38.4 L258.1,29 Q256.9,28.2 257.3,26.8 Z" fill="#dcdcdc" stroke="#dcdcdc" stroke-width="1" stroke-linejoin="round"/>
<path d="M266.5,13.3 L271.9,18.2 L271.9,38.2 L257.9,27.8 Z" fill="url(#gpl)"/>
<path d="M277.3,13.3 L271.9,18.2 L271.9,38.2 L285.9,27.8 Z" fill="url(#gpr)"/>
<path d="M266.5,13.3 L271.9,18.4 L277.3,13.3 L271.9,12.5Z" fill="#ececec"/>
</svg>
<svg class="abs" style="left:298px;top:8px" width="36" height="35" viewBox="298 8 36 35">
<circle cx="315.7" cy="25.3" r="12.7" fill="#fff"/><path d="M315.69,20.10 L323.70,16.22 A12.1,12.1 0 0 1 327.79,25.89 Z" fill="#ffa050"/><path d="M319.76,22.05 L327.79,25.89 A12.1,12.1 0 0 1 322.77,35.12 Z" fill="#f04048"/><path d="M320.77,26.44 L322.77,35.12 A12.1,12.1 0 0 1 312.44,36.95 Z" fill="#9070f0"/><path d="M317.97,29.98 L312.44,36.95 A12.1,12.1 0 0 1 304.56,30.01 Z" fill="#50c8f0"/><path d="M313.46,29.99 L304.56,30.01 A12.1,12.1 0 0 1 305.07,19.52 Z" fill="#50e8b8"/><path d="M310.63,26.47 L305.07,19.52 A12.1,12.1 0 0 1 313.59,13.39 Z" fill="#c8f040"/><path d="M311.63,22.07 L313.59,13.39 A12.1,12.1 0 0 1 323.70,16.22 Z" fill="#f0d840"/>
<circle cx="315.7" cy="25.3" r="4.4" fill="#000"/></svg>
<div class="abs" style="left:77px;top:64px;width:13px;height:414px;background:linear-gradient(to bottom,#ff0000 0px,#ff0000 68px,#b0b000 123px,#00c000 180px,#008c8c 237px,#0000ff 292px,#a000a0 350px,#a000a0 414px)"></div>
<div class="abs" style="left:71px;top:111px;width:25px;height:24.5px;border-radius:4.5px;background:rgba(255,255,255,0.91)"><div style="position:absolute;left:6px;top:11px;width:13px;height:2px;background:#383838"></div></div>
<div class="abs" style="left:71px;top:406.5px;width:25px;height:24.5px;border-radius:4.5px;background:rgba(255,255,255,0.91)"><div style="position:absolute;left:6px;top:12.4px;width:13px;height:1.2px;background:#383838"></div></div>
<div class="abs" style="left:12px;top:63.0px;width:13px;height:1px;background:#c8c8c8"></div>
<div class="abs" style="left:27.4px;top:53.5px;font-size:16.5px;line-height:20px;color:#fff">5</div>
<div class="abs" style="left:12px;top:149.5px;width:13px;height:1px;background:#c8c8c8"></div>
<div class="abs" style="left:27.4px;top:140.0px;font-size:16.5px;line-height:20px;color:#fff">0</div>
<div class="abs" style="left:12px;top:235.5px;width:13px;height:1px;background:#c8c8c8"></div>
<div class="abs" style="left:27.4px;top:226.0px;font-size:16.5px;line-height:20px;color:#fff">-5</div>
<div class="abs" style="left:12px;top:321.1px;width:13px;height:1px;background:#c8c8c8"></div>
<div class="abs" style="left:27.4px;top:311.6px;font-size:16.5px;line-height:20px;color:#fff">-10</div>
<div class="abs" style="left:12px;top:408.1px;width:13px;height:1px;background:#c8c8c8"></div>
<div class="abs" style="left:27.4px;top:398.6px;font-size:16.5px;line-height:20px;color:#fff">-15</div>
<div class="abs" style="left:12px;top:494.3px;width:13px;height:1px;background:#c8c8c8"></div>
<div class="abs" style="left:27.4px;top:484.8px;font-size:16.5px;line-height:20px;color:#fff">-20</div>
<div class="abs" style="left:13px;top:512.3px;font-size:15.4px;line-height:22px;color:#fff">最大值</div>
<div class="abs" style="left:67px;top:504px;width:114px;height:32px;border:3px solid #808080;background:#000"><svg class="abs" style="left:9px;top:7.3px" width="10" height="16" viewBox="0 0 10 16"><path d="M9,0.8 L1,8 L9,15.2" fill="none" stroke="#e0e0e0" stroke-width="1.1"/></svg><svg class="abs" style="left:95px;top:7.3px" width="10" height="16" viewBox="0 0 10 16"><path d="M1,0.8 L9,8 L1,15.2" fill="none" stroke="#e0e0e0" stroke-width="1.1"/></svg><div class="abs" style="left:0;width:120px;margin-left:-2.5px;top:2.3px;text-align:center;font-size:18px;line-height:22px;color:#fff;letter-spacing:0">1</div></div>
<div class="abs" style="left:13px;top:556.5px;font-size:15.4px;line-height:22px;color:#fff">最小值</div>
<div class="abs" style="left:67px;top:548px;width:114px;height:32px;border:3px solid #808080;background:#000"><svg class="abs" style="left:9px;top:7.3px" width="10" height="16" viewBox="0 0 10 16"><path d="M9,0.8 L1,8 L9,15.2" fill="none" stroke="#e0e0e0" stroke-width="1.1"/></svg><svg class="abs" style="left:95px;top:7.3px" width="10" height="16" viewBox="0 0 10 16"><path d="M1,0.8 L9,8 L1,15.2" fill="none" stroke="#e0e0e0" stroke-width="1.1"/></svg><div class="abs" style="left:0;width:120px;margin-left:-2.5px;top:2.3px;text-align:center;font-size:18px;line-height:22px;color:#fff;letter-spacing:1.4px">-16</div></div>
<div class="abs" style="left:13px;top:599.3px;font-size:15.4px;line-height:22px;color:#fff">位数</div>
<div class="abs" style="left:67px;top:592px;width:114px;height:31px;border:3px solid #666;background:#000"><div class="abs" style="left:13px;top:4px;font-size:18px;line-height:22px;color:#fff">0</div><svg class="abs" style="left:89.3px;top:10.6px" width="16" height="10" viewBox="0 0 16 10"><path d="M0.8,1 L8,8.5 L15.2,1" fill="none" stroke="#e0e0e0" stroke-width="1.1"/></svg></div>
<div class="abs" style="left:0;top:640px;width:1081px;height:65px;background:#808080"></div>
<div class="abs" style="left:0;top:703px;width:1080px;height:1px;background:#3c3c3c"></div>
<div class="abs" style="left:14px;top:653px;width:37px;height:37px;background:#4060ff"></div>
<div class="abs" style="left:51px;top:653px;width:38px;height:37px;background:#9a9a9a"></div>
<div class="abs" style="left:95px;top:653px;width:37px;height:37px;background:#4060ff"></div>
<div class="abs" style="left:132px;top:653px;width:38px;height:37px;background:#9a9a9a"></div>
<svg class="abs" style="left:14px;top:653px" width="37" height="37" viewBox="14 653 37 37">
<g fill="#a8b8ff" fill-opacity="0.55" stroke="#fff" stroke-width="1" stroke-linejoin="round">
<polygon points="23.1,667.8 32.5,661.9 41.6,667.8 32.5,672.6"/><polygon points="23.1,667.8 32.5,672.6 32.5,681.5 26.9,678.9"/><polygon points="32.5,672.6 41.6,667.8 38,678.9 32.5,681.5"/></g>
<g fill="#fff"><circle cx="23.1" cy="667.8" r="1.3"/><circle cx="32.5" cy="661.9" r="1.3"/><circle cx="41.6" cy="667.8" r="1.3"/><circle cx="32.5" cy="672.6" r="1.3"/><circle cx="26.9" cy="678.9" r="1.3"/><circle cx="32.5" cy="681.5" r="1.3"/><circle cx="38" cy="678.9" r="1.3"/></g>
</svg>
<svg class="abs" style="left:51px;top:653px" width="38" height="37" viewBox="51 653 38 37">
<g fill="#c8c8c8" fill-opacity="0.45" stroke="#e8e8e8" stroke-width="1" stroke-linejoin="round">
<polygon points="61.1,666.9 70.3,661.5 79.4,666.9 70.3,671.9"/><polygon points="61.1,666.9 70.3,671.9 70.3,681 61.1,675.8"/><polygon points="70.3,671.9 79.4,666.9 79.4,675.8 70.3,681"/></g>
<g fill="#f0f0f0"><circle cx="61.1" cy="666.9" r="1.2"/><circle cx="70.3" cy="661.5" r="1.2"/><circle cx="79.4" cy="666.9" r="1.2"/><circle cx="70.3" cy="671.9" r="1.2"/><circle cx="61.1" cy="675.8" r="1.2"/><circle cx="70.3" cy="681" r="1.2"/><circle cx="79.4" cy="675.8" r="1.2"/></g>
</svg>
<svg class="abs" style="left:95px;top:653px" width="37" height="37" viewBox="95 653 37 37"><rect x="102.2" y="660.2" width="2" height="2" fill="#fff"/><rect x="112.7" y="660.2" width="2" height="2" fill="#fff"/><rect x="123.2" y="660.2" width="2" height="2" fill="#fff"/><rect x="102.2" y="670.6" width="2" height="2" fill="#fff"/><rect x="112.7" y="670.6" width="2" height="2" fill="#fff"/><rect x="123.2" y="670.6" width="2" height="2" fill="#fff"/><rect x="102.2" y="681.0" width="2" height="2" fill="#fff"/><rect x="112.7" y="681.0" width="2" height="2" fill="#fff"/><rect x="123.2" y="681.0" width="2" height="2" fill="#fff"/></svg>
<svg class="abs" style="left:132px;top:653px" width="38" height="37" viewBox="132 653 38 37">
<g fill="none" stroke="#dedede" stroke-width="0.9"><rect x="140.5" y="660.5" width="22" height="21"/><line x1="151.5" y1="660.5" x2="151.5" y2="681.5"/><line x1="140.5" y1="671" x2="162.5" y2="671"/>
<line x1="140.5" y1="681.5" x2="162.5" y2="660.5"/><line x1="140.5" y1="671" x2="151.5" y2="660.5"/><line x1="151.5" y1="681.5" x2="162.5" y2="671"/></g>
<g fill="#fff"><circle cx="140.5" cy="660.5" r="1.1"/><circle cx="151.5" cy="660.5" r="1.1"/><circle cx="162.5" cy="660.5" r="1.1"/><circle cx="140.5" cy="671" r="1.1"/><circle cx="151.5" cy="671" r="1.1"/><circle cx="162.5" cy="671" r="1.1"/><circle cx="140.5" cy="681.5" r="1.1"/><circle cx="151.5" cy="681.5" r="1.1"/><circle cx="162.5" cy="681.5" r="1.1"/></g></svg>
<div class="abs" style="left:174px;top:653px;width:35px;height:35px;border:1px solid #c4c4c4;background:#808080"><div class="abs" style="left:16px;top:15px;width:3px;height:3px;border-radius:1.5px;background:#fff"></div></div>
<div class="abs" style="left:211px;top:653px;width:25px;height:37px;background:#9a9a9a"><svg width="25" height="37" viewBox="0 0 25 37" style="position:absolute;left:0;top:0"><path d="M5,13.5 L12.5,5.5 L20,13.5" fill="none" stroke="#fff" stroke-width="2"/><path d="M5,23.5 L12.5,31.5 L20,23.5" fill="none" stroke="#fff" stroke-width="2"/></svg></div>
<div class="abs" style="left:821px;top:661px;font-size:15px;line-height:22px;color:#141414">点坐标</div>
<div class="abs" style="left:877.5px;top:660px;width:49.6px;height:19.2px;border:2.8px solid #9a9a9a;border-radius:13px"><div class="abs" style="left:4px;top:3.8px;width:12px;height:12px;border-radius:6px;background:#9a9a9a"></div></div>
<div class="abs" style="left:943.5px;top:661px;font-size:15px;line-height:22px;color:#141414">缩略图</div>
<div class="abs" style="left:1000px;top:660px;width:49.6px;height:19.2px;border:2.8px solid #d4d4d4;border-radius:13px"><div class="abs" style="left:3px;top:3.2px;width:13px;height:13px;border-radius:6.5px;background:#f0f0f0"></div></div>
<div class="abs" style="left:905px;top:7px;width:37px;height:37px;background:#333"></div>
<div class="abs" style="left:949px;top:7px;width:37px;height:37px;background:#333"></div>
<div class="abs" style="left:992px;top:7px;width:38px;height:37px;background:#333"></div>
<div class="abs" style="left:1036px;top:7px;width:38px;height:37px;background:#333"></div>
<svg class="abs" style="left:905px;top:7px" width="37" height="37" viewBox="905 7 37 37"><g fill="none" stroke="#f0f0f0" stroke-width="1.4" stroke-linecap="round"><circle cx="922" cy="24" r="8.2"/><line x1="928" y1="30" x2="933.5" y2="35.5"/><line x1="919" y1="24" x2="925" y2="24"/><line x1="922" y1="21" x2="922" y2="27"/></g></svg>
<svg class="abs" style="left:949px;top:7px" width="37" height="37" viewBox="949 7 37 37"><g fill="none" stroke="#f0f0f0" stroke-width="1.4" stroke-linecap="round"><circle cx="966" cy="24" r="8.2"/><line x1="972" y1="30" x2="977.5" y2="35.5"/><line x1="963" y1="24" x2="969" y2="24"/></g></svg>
<svg class="abs" style="left:992px;top:7px" width="38" height="37" viewBox="992 7 38 37"><g fill="none" stroke="#f0f0f0" stroke-width="1.7">
<path d="M1008.3,22.3 L1003.5,17.5"/><path d="M1013.7,22.3 L1018.5,17.5"/><path d="M1008.3,28.7 L1003.5,33.5"/><path d="M1013.7,28.7 L1018.5,33.5"/></g>
<g fill="#f0f0f0"><polygon points="1001.8,15.8 1008.2,15.8 1001.8,22.2"/><polygon points="1020.2,15.8 1013.8,15.8 1020.2,22.2"/><polygon points="1001.8,35.2 1008.2,35.2 1001.8,28.8"/><polygon points="1020.2,35.2 1013.8,35.2 1020.2,28.8"/></g></svg>
<svg class="abs" style="left:1036px;top:7px" width="38" height="37" viewBox="1036 7 38 37"><g fill="none" stroke="#f0f0f0" stroke-width="1.6">
<path d="M1046.2,24 A8.8,8.8 0 0 1 1062.8,21"/><path d="M1063.8,27 A8.8,8.8 0 0 1 1047.2,30"/></g>
<polygon points="1042.8,25.5 1046.2,21 1049.6,25.5" fill="#f0f0f0"/><polygon points="1060.4,25.5 1063.8,30 1067.2,25.5" fill="#f0f0f0"/></svg>
<div class="abs" style="left:1035px;top:205px;width:37px;height:37px;background:#333"><svg width="37" height="38" viewBox="0 0 37 38" style="position:absolute;left:0;top:0"><polygon points="9.2,13.3 17.6,8.6 17.3,20.8 9.4,26" fill="#a8a8a8" fill-opacity="0.6"/><g fill="none" stroke="#c0c0c0" stroke-width="0.9" stroke-linejoin="round"><polygon points="9.2,13.3 17.6,8.6 29,12.4 20.4,17.2"/><polygon points="9.2,13.3 20.4,17.2 20.8,29.4 9.4,26"/><polygon points="20.4,17.2 29,12.4 29,23.8 20.8,29.4"/></g><g fill="none" stroke="#a0a0a0" stroke-width="0.8" stroke-dasharray="1.5 1.2"><line x1="17.6" y1="8.6" x2="17.3" y2="20.8"/><line x1="9.4" y1="26" x2="17.3" y2="20.8"/><line x1="29" y1="23.8" x2="17.3" y2="20.8"/></g></svg></div>
<div class="abs" style="left:1035px;top:249px;width:37px;height:37px;background:#333"><svg width="37" height="38" viewBox="0 0 37 38" style="position:absolute;left:0;top:0"><polygon points="20.4,17.2 29,12.4 29,23.8 20.8,29.4" fill="#a8a8a8" fill-opacity="0.6"/><g fill="none" stroke="#c0c0c0" stroke-width="0.9" stroke-linejoin="round"><polygon points="9.2,13.3 17.6,8.6 29,12.4 20.4,17.2"/><polygon points="9.2,13.3 20.4,17.2 20.8,29.4 9.4,26"/><polygon points="20.4,17.2 29,12.4 29,23.8 20.8,29.4"/></g><g fill="none" stroke="#a0a0a0" stroke-width="0.8" stroke-dasharray="1.5 1.2"><line x1="17.6" y1="8.6" x2="17.3" y2="20.8"/><line x1="9.4" y1="26" x2="17.3" y2="20.8"/><line x1="29" y1="23.8" x2="17.3" y2="20.8"/></g></svg></div>
<div class="abs" style="left:1035px;top:293px;width:37px;height:37px;background:#333"><svg width="37" height="38" viewBox="0 0 37 38" style="position:absolute;left:0;top:0"><polygon points="9.2,13.3 20.4,17.2 20.8,29.4 9.4,26" fill="#a8a8a8" fill-opacity="0.6"/><g fill="none" stroke="#c0c0c0" stroke-width="0.9" stroke-linejoin="round"><polygon points="9.2,13.3 17.6,8.6 29,12.4 20.4,17.2"/><polygon points="9.2,13.3 20.4,17.2 20.8,29.4 9.4,26"/><polygon points="20.4,17.2 29,12.4 29,23.8 20.8,29.4"/></g><g fill="none" stroke="#a0a0a0" stroke-width="0.8" stroke-dasharray="1.5 1.2"><line x1="17.6" y1="8.6" x2="17.3" y2="20.8"/><line x1="9.4" y1="26" x2="17.3" y2="20.8"/><line x1="29" y1="23.8" x2="17.3" y2="20.8"/></g></svg></div>
<div class="abs" style="left:1035px;top:337px;width:37px;height:37px;background:#333"><svg width="37" height="38" viewBox="0 0 37 38" style="position:absolute;left:0;top:0"><polygon points="17.6,8.6 29,12.4 29,23.8 17.3,20.8" fill="#a8a8a8" fill-opacity="0.6"/><g fill="none" stroke="#c0c0c0" stroke-width="0.9" stroke-linejoin="round"><polygon points="9.2,13.3 17.6,8.6 29,12.4 20.4,17.2"/><polygon points="9.2,13.3 20.4,17.2 20.8,29.4 9.4,26"/><polygon points="20.4,17.2 29,12.4 29,23.8 20.8,29.4"/></g><g fill="none" stroke="#a0a0a0" stroke-width="0.8" stroke-dasharray="1.5 1.2"><line x1="17.6" y1="8.6" x2="17.3" y2="20.8"/><line x1="9.4" y1="26" x2="17.3" y2="20.8"/><line x1="29" y1="23.8" x2="17.3" y2="20.8"/></g></svg></div>
<div class="abs" style="left:1035px;top:380px;width:37px;height:37px;background:#333"><svg width="37" height="38" viewBox="0 0 37 38" style="position:absolute;left:0;top:0"><polygon points="9.4,26 17.3,20.8 29,23.8 20.8,29.4" fill="#a8a8a8" fill-opacity="0.6"/><g fill="none" stroke="#c0c0c0" stroke-width="0.9" stroke-linejoin="round"><polygon points="9.2,13.3 17.6,8.6 29,12.4 20.4,17.2"/><polygon points="9.2,13.3 20.4,17.2 20.8,29.4 9.4,26"/><polygon points="20.4,17.2 29,12.4 29,23.8 20.8,29.4"/></g><g fill="none" stroke="#a0a0a0" stroke-width="0.8" stroke-dasharray="1.5 1.2"><line x1="17.6" y1="8.6" x2="17.3" y2="20.8"/><line x1="9.4" y1="26" x2="17.3" y2="20.8"/><line x1="29" y1="23.8" x2="17.3" y2="20.8"/></g></svg></div>
<div class="abs" style="left:1035px;top:424px;width:37px;height:37px;background:#333"><svg width="37" height="38" viewBox="0 0 37 38" style="position:absolute;left:0;top:0"><polygon points="9.2,13.3 17.6,8.6 29,12.4 20.4,17.2" fill="#a8a8a8" fill-opacity="0.6"/><g fill="none" stroke="#c0c0c0" stroke-width="0.9" stroke-linejoin="round"><polygon points="9.2,13.3 17.6,8.6 29,12.4 20.4,17.2"/><polygon points="9.2,13.3 20.4,17.2 20.8,29.4 9.4,26"/><polygon points="20.4,17.2 29,12.4 29,23.8 20.8,29.4"/></g><g fill="none" stroke="#a0a0a0" stroke-width="0.8" stroke-dasharray="1.5 1.2"><line x1="17.6" y1="8.6" x2="17.3" y2="20.8"/><line x1="9.4" y1="26" x2="17.3" y2="20.8"/><line x1="29" y1="23.8" x2="17.3" y2="20.8"/></g></svg></div>
</body></html>
